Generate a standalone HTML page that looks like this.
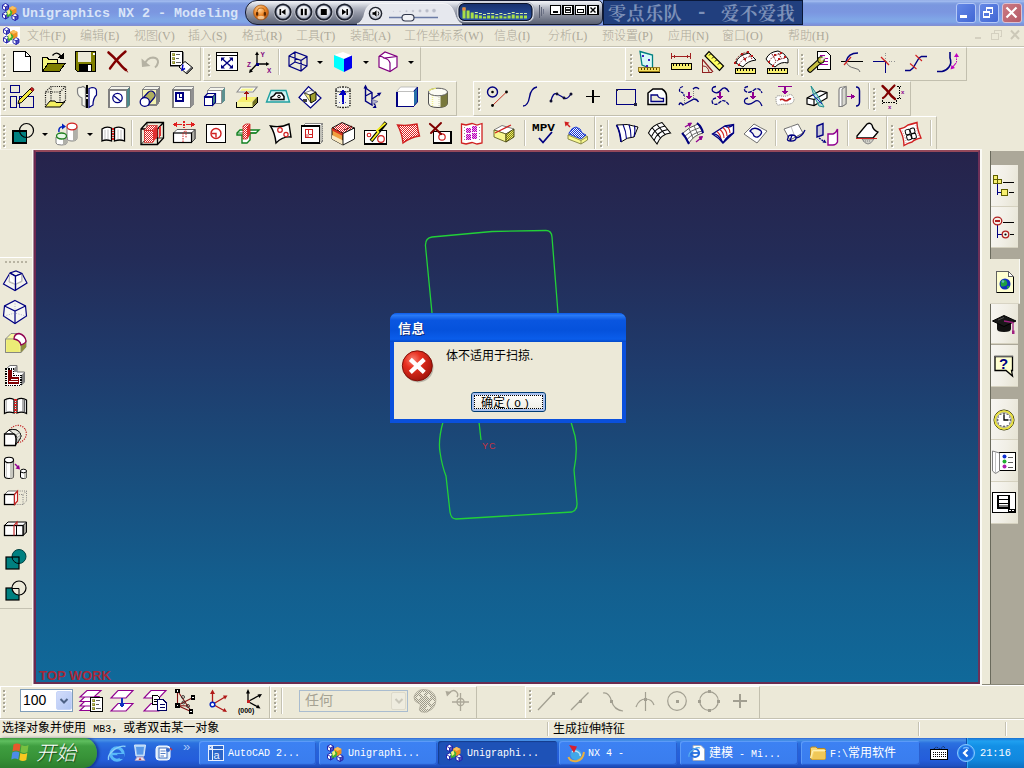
<!DOCTYPE html>
<html lang="zh-CN">
<head>
<meta charset="utf-8">
<title>Unigraphics NX 2 - Modeling</title>
<style>
html,body{margin:0;padding:0;}
body{width:1024px;height:768px;overflow:hidden;background:#ECE9D8;font-family:"Liberation Sans","Noto Sans CJK SC",sans-serif;font-size:12px;color:#000;}
#root{position:relative;width:1024px;height:768px;overflow:hidden;background:#ECE9D8;}
#root *{box-sizing:border-box;}
.abs,.ic,.grip,.vsep,.dd,.t{position:absolute;}
.ic{overflow:visible;shape-rendering:crispEdges;}
.ic .s{shape-rendering:geometricPrecision;}
.grip{width:3px;background-image:repeating-linear-gradient(to bottom,#A9A696 0,#A9A696 2px,transparent 2px,transparent 4px),repeating-linear-gradient(to bottom,transparent 0,transparent 1px,#fff 1px,#fff 3px,transparent 3px,transparent 4px);background-size:2px 100%,2px 100%;background-position:0 0,1px 0;background-repeat:no-repeat;}
.vsep{width:2px;border-left:1px solid #C5C2B2;border-right:1px solid #fff;}
.dd{width:0;height:0;border-left:3px solid transparent;border-right:3px solid transparent;border-top:3px solid #000;}
.t{white-space:nowrap;line-height:1;}
.menu{color:#ACA899;font-weight:300;font-size:12px;top:30px;font-family:"Liberation Serif","Noto Sans CJK SC",sans-serif;}
.hl{position:absolute;left:0;width:1024px;height:1px;}
.tb{position:absolute;border:1px solid #C2BFAE;border-top-color:#fff;border-left-color:#fff;}
.task{position:absolute;top:741px;height:24px;border-radius:3px;background:linear-gradient(#3C81F3,#3C81F3 10%,#3A7DEE 90%,#2F6FDE);box-shadow:inset 1px 1px 0 #5C9BF8,inset -1px -1px 0 #2A5FD0;color:#fff;font-size:12px;}
.task.on{background:#1E52B7;box-shadow:inset 1px 1px 1px #143C8C;}
.task span{position:absolute;left:29px;top:7px;white-space:nowrap;line-height:12px;font-family:"Liberation Mono","Noto Sans CJK SC",monospace;font-size:10px;}
.task span b{font-weight:normal;font-size:12px;}
.rtab{position:absolute;left:991px;width:27px;background:linear-gradient(100deg,#F7F6F2 0,#F1EFE6 50%,#E6E3D3 100%);border-bottom:1px solid #D5D1BF;}
</style>
</head>
<body>
<div id="root">
<svg class="abs" width="0" height="0" style="left:0;top:0"><defs><pattern id="hr" width="2" height="2" patternUnits="userSpaceOnUse"><rect width="2" height="2" fill="#fff"/><rect width="1" height="1" fill="#E02020"/><rect x="1" y="1" width="1" height="1" fill="#E02020"/></pattern><pattern id="hm" width="2" height="2" patternUnits="userSpaceOnUse"><rect width="2" height="2" fill="#F0A0F0"/><rect width="1" height="1" fill="#B000B0"/><rect x="1" y="1" width="1" height="1" fill="#B000B0"/></pattern><pattern id="hb" width="2" height="2" patternUnits="userSpaceOnUse"><rect width="2" height="2" fill="#fff"/><rect width="1" height="1" fill="#1030D0"/><rect x="1" y="1" width="1" height="1" fill="#1030D0"/></pattern><pattern id="hy" width="2" height="2" patternUnits="userSpaceOnUse"><rect width="2" height="2" fill="#F0F060"/><rect width="1" height="1" fill="#808020"/><rect x="1" y="1" width="1" height="1" fill="#808020"/></pattern></defs></svg>
<div class="abs" style="left:0;top:0;width:1024px;height:26px;background:linear-gradient(#96B0E8 0,#9DB8EE 1.5px,#82A0E2 3px,#7A97DF 5px,#7B96E0 12px,#7D9EE4 16px,#80A6E6 19px,#80A6E6 22px,#7B94E0 24px,#8490CC 26px);"></div>
<div class="t" style="left:22px;top:6px;font:bold 13.33px 'Liberation Mono',monospace;color:#D8E4F8;">Unigraphics NX 2 - Modeling</div>
<svg class="ic" style="left:1.5px;top:3px" width="18" height="18" viewBox="0 0 18 18"><path class="s" d="M0.5 2.2L3.5 0.5L6.5 2.2V5.8L3.5 7.5L0.5 5.8Z" fill="#fff" stroke="#1818A8" stroke-width=".9"/><path class="s" d="M3.5 3.9V7.5M0.8 2.4L3.5 3.9L6.2 2.4" stroke="#1818A8" stroke-width=".9" fill="none"/><path class="s" d="M3.5 3.9L6.5 2.2V5.8L3.5 7.5Z" fill="#1818A8" fill-opacity=".75"/><path class="s" d="M0.5 10.7L3.5 9L6.5 10.7V14.3L3.5 16L0.5 14.3Z" fill="#fff" stroke="#1818A8" stroke-width=".9"/><path class="s" d="M3.5 12.4V16M0.8 10.9L3.5 12.4L6.2 10.9" stroke="#1818A8" stroke-width=".9" fill="none"/><path class="s" d="M3.5 12.4L6.5 10.7V14.3L3.5 16Z" fill="#1818A8" fill-opacity=".75"/><path class="s" d="M10 12.2L13 10.5L16 12.2V15.8L13 17.5L10 15.8Z" fill="#fff" stroke="#1818A8" stroke-width=".9"/><path class="s" d="M13 13.9V17.5M10.3 12.4L13 13.9L15.7 12.4" stroke="#1818A8" stroke-width=".9" fill="none"/><path class="s" d="M13 13.9L16 12.2V15.8L13 17.5Z" fill="#1818A8" fill-opacity=".75"/><path class="s" d="M7 5L10.500 3L14.500 5V9.500L10.500 12L7 9.500Z" fill="#F09020"/><path class="s" d="M7 5L10.500 7L14.500 5L10.500 3Z" fill="#F8C060"/><path class="s" d="M4.500 9L8 6.500L10.500 9L9 13L5 14Z" fill="#40B030"/><path class="s" d="M5 8L7.500 6.500L8.500 10L6 12Z" fill="#F8F080"/></svg>
<div class="abs" style="left:245px;top:0px;width:358px;height:25px;border-radius:12px 5px 6px 12px;background:linear-gradient(#F4F5F8 0,#DCDFE6 12%,#B4B8C4 30%,#9498A6 52%,#747A8A 78%,#5A6072 100%);border:1px solid #141A30;"></div>
<svg class="ic" style="left:246px;top:0px" width="356" height="24" viewBox="0 0 356 24"><defs><radialGradient id="og" cx=".4" cy=".3" r=".75"><stop offset="0" stop-color="#FFD8A0"/><stop offset=".5" stop-color="#F08828"/><stop offset="1" stop-color="#A84808"/></radialGradient><radialGradient id="bg1" cx=".5" cy=".35" r=".7"><stop offset="0" stop-color="#FFFFFF"/><stop offset=".6" stop-color="#E4E6EC"/><stop offset="1" stop-color="#9AA0B0"/></radialGradient><linearGradient id="vg" x1="0" y1="0" x2="0" y2="1"><stop offset="0" stop-color="#17306C"/><stop offset="1" stop-color="#2A54A8"/></linearGradient></defs><g class="s"><circle cx="15" cy="12.500" r="7.500" fill="url(#og)" stroke="#9A5A20" stroke-width=".7"/><path d="M11 13Q11 8 15 8T19 13" fill="none" stroke="#B86818" stroke-width="1.100"/><rect x="10" y="12" width="2.300" height="3.800" rx="1" fill="#5A2800"/><rect x="17.700" y="12" width="2.300" height="3.800" rx="1" fill="#5A2800"/><ellipse cx="15" cy="17.500" rx="3.500" ry="1.800" fill="#FFE8C0" fill-opacity=".7"/><circle cx="37" cy="12.300" r="9.300" fill="#D8DAE2" fill-opacity=".7"/><circle cx="37" cy="12" r="8.600" fill="#1C202C"/><circle cx="37" cy="12" r="6.600" fill="url(#bg1)" stroke="#8088A0" stroke-width=".6"/><rect x="33.5" y="9" width="1.600" height="6" fill="#000"/><path d="M39.5 9V15L35.2 12Z" fill="#000"/><circle cx="57.8" cy="12.300" r="9.300" fill="#D8DAE2" fill-opacity=".7"/><circle cx="57.8" cy="12" r="8.600" fill="#1C202C"/><circle cx="57.8" cy="12" r="6.600" fill="url(#bg1)" stroke="#8088A0" stroke-width=".6"/><rect x="54.8" y="8.800" width="2.200" height="6.400" fill="#000"/><rect x="58.599999999999994" y="8.800" width="2.200" height="6.400" fill="#000"/><circle cx="77.8" cy="12.300" r="9.300" fill="#D8DAE2" fill-opacity=".7"/><circle cx="77.8" cy="12" r="8.600" fill="#1C202C"/><circle cx="77.8" cy="12" r="6.600" fill="url(#bg1)" stroke="#8088A0" stroke-width=".6"/><rect x="74.8" y="9" width="6" height="6" fill="#000"/><circle cx="98.5" cy="12.300" r="9.300" fill="#D8DAE2" fill-opacity=".7"/><circle cx="98.5" cy="12" r="8.600" fill="#1C202C"/><circle cx="98.5" cy="12" r="6.600" fill="url(#bg1)" stroke="#8088A0" stroke-width=".6"/><rect x="100.4" y="9" width="1.600" height="6" fill="#000"/><path d="M96.0 9V15L100.3 12Z" fill="#000"/><path d="M111 24Q117 22 119 12Q121 3.500 130 3.500H197Q205 3.500 208 12Q211 22 216 24Z" fill="#E6E8EE" stroke="#F8F8FA" stroke-width=".8"/><circle cx="129.500" cy="13.500" r="6.800" fill="#20242E"/><circle cx="129.500" cy="13.500" r="5.400" fill="url(#bg1)"/><path d="M126.500 12.300H128.300L130.500 10.300V16.700L128.300 14.700H126.500Z" fill="#000"/><path d="M132 11.500Q133.500 13.500 132 15.500" fill="none" stroke="#000" stroke-width=".9"/><path d="M143 17.500H192" stroke="#6C7CA6" stroke-width="1.400"/><circle cx="147.5" cy="11.50" r="0.40" fill="#B8BCC8" stroke="#D8DAE2" stroke-width=".4"/><circle cx="154" cy="11.35" r="0.65" fill="#B8BCC8" stroke="#D8DAE2" stroke-width=".4"/><circle cx="160.5" cy="11.20" r="0.90" fill="#B8BCC8" stroke="#D8DAE2" stroke-width=".4"/><circle cx="167" cy="11.05" r="1.15" fill="#B8BCC8" stroke="#D8DAE2" stroke-width=".4"/><circle cx="174" cy="10.90" r="1.40" fill="#B8BCC8" stroke="#D8DAE2" stroke-width=".4"/><circle cx="181" cy="10.75" r="1.65" fill="#B8BCC8" stroke="#D8DAE2" stroke-width=".4"/><circle cx="188" cy="10.60" r="1.90" fill="#B8BCC8" stroke="#D8DAE2" stroke-width=".4"/><rect x="156" y="14.500" width="12" height="6.500" rx="3.200" fill="#F0F1F5" stroke="#30364A" stroke-width="1.100"/><rect x="211" y="2" width="77" height="20" rx="7" fill="#E8EAF0" stroke="#9098A8" stroke-width=".6"/><rect x="213" y="3.500" width="73" height="17" rx="5.500" fill="url(#vg)" stroke="#0A1228" stroke-width="1.200"/><rect x="216.5" y="7.5" width="3" height="11" fill="#A8E048"/><rect x="216.5" y="7.5" width="3" height="3" fill="#F08040"/><rect x="220.6" y="10.5" width="3" height="8" fill="#A8E048"/><rect x="224.7" y="12.5" width="3" height="6" fill="#A8E048"/><rect x="228.8" y="14.5" width="3" height="4" fill="#A8E048"/><rect x="228.8" y="12.0" width="3" height="1" fill="#D8F0A0"/><rect x="232.9" y="15.5" width="3" height="3" fill="#A8E048"/><rect x="232.9" y="13.0" width="3" height="1" fill="#D8F0A0"/><rect x="237.0" y="16.5" width="3" height="2" fill="#A8E048"/><rect x="237.0" y="14.0" width="3" height="1" fill="#D8F0A0"/><rect x="241.1" y="15.5" width="3" height="3" fill="#A8E048"/><rect x="241.1" y="13.0" width="3" height="1" fill="#D8F0A0"/><rect x="245.2" y="15.5" width="3" height="3" fill="#A8E048"/><rect x="245.2" y="13.0" width="3" height="1" fill="#D8F0A0"/><rect x="249.3" y="16.5" width="3" height="2" fill="#A8E048"/><rect x="249.3" y="14.0" width="3" height="1" fill="#D8F0A0"/><rect x="253.4" y="15.5" width="3" height="3" fill="#A8E048"/><rect x="253.4" y="13.0" width="3" height="1" fill="#D8F0A0"/><rect x="257.5" y="16.5" width="3" height="2" fill="#A8E048"/><rect x="257.5" y="14.0" width="3" height="1" fill="#D8F0A0"/><rect x="261.6" y="15.5" width="3" height="3" fill="#A8E048"/><rect x="261.6" y="13.0" width="3" height="1" fill="#D8F0A0"/><rect x="265.7" y="14.5" width="3" height="4" fill="#A8E048"/><rect x="265.7" y="12.0" width="3" height="1" fill="#D8F0A0"/><rect x="269.8" y="15.5" width="3" height="3" fill="#A8E048"/><rect x="269.8" y="13.0" width="3" height="1" fill="#D8F0A0"/><rect x="273.9" y="15.5" width="3" height="3" fill="#A8E048"/><rect x="273.9" y="13.0" width="3" height="1" fill="#D8F0A0"/><rect x="278.0" y="15.5" width="3" height="3" fill="#A8E048"/><rect x="278.0" y="13.0" width="3" height="1" fill="#D8F0A0"/><path d="M293.500 5V18" stroke="#50566A" stroke-width="1"/><path d="M295.500 7V16" stroke="#60667A" stroke-width="1"/><path d="M297.500 9V14" stroke="#70768A" stroke-width="1"/></g><rect x="304.5" y="5.500" width="10" height="9" fill="#fff" stroke="#000" stroke-width="1.200"/><rect x="307" y="10.500" width="5" height="2" fill="#000"/><rect x="317.0" y="5.500" width="10" height="9" fill="#fff" stroke="#000" stroke-width="1.200"/><rect x="319.5" y="7.500" width="5" height="2" fill="none" stroke="#000" stroke-width=".9"/><rect x="319.5" y="10.500" width="5" height="2" fill="none" stroke="#000" stroke-width=".9"/><rect x="329.5" y="5.500" width="10" height="9" fill="#fff" stroke="#000" stroke-width="1.200"/><rect x="331.5" y="9.500" width="6" height="3" fill="none" stroke="#000" stroke-width="1"/><rect x="342.0" y="5.500" width="10" height="9" fill="#fff" stroke="#000" stroke-width="1.200"/><path class="s" d="M344.5 7.500L349.5 12.500M349.5 7.500L344.5 12.500" stroke="#000" stroke-width="1.400"/></svg>
<div class="abs" style="left:603px;top:0;width:200px;height:25px;background:#213F7E;border:1px solid #0A1838;"></div>
<div class="t" style="left:608px;top:-1px;font:bold 18px 'Liberation Serif','Noto Serif CJK SC',serif;color:#7C90B8;letter-spacing:.5px;">零点乐队</div>
<div class="t" style="left:696px;top:2px;font:bold 19px 'Liberation Mono',monospace;color:#7C90B8;">-</div>
<div class="t" style="left:721px;top:-1px;font:bold 18px 'Liberation Serif','Noto Serif CJK SC',serif;color:#7C90B8;letter-spacing:.5px;">爱不爱我</div>
<div class="abs" style="left:956px;top:3px;width:20px;height:20px;border-radius:3px;background:linear-gradient(135deg,#6488E6,#4166D4);border:1px solid #B4C8F6;"></div>
<div class="abs" style="left:979px;top:3px;width:20px;height:20px;border-radius:3px;background:linear-gradient(135deg,#6488E6,#4166D4);border:1px solid #B4C8F6;"></div>
<div class="abs" style="left:1002px;top:3px;width:20px;height:20px;border-radius:3px;background:linear-gradient(135deg,#CC7A84,#B45A66);border:1px solid #DCC0D0;"></div>
<svg class="ic" style="left:956px;top:3px" width="66" height="20" viewBox="0 0 66 20"><rect x="4" y="12" width="7" height="3" fill="#fff"/><g fill="none" stroke="#fff" stroke-width="1.200"><path d="M30.500 7.500V4.500H36.500V10.500H34"/><path d="M30.500 5.200H36.500" stroke-width="1.600"/><rect x="27.500" y="8.500" width="6" height="5.500"/><path d="M27.500 9.200H33.500" stroke-width="1.600"/></g><path class="s" d="M50.500 4.500L60.500 14.500M60.500 4.500L50.500 14.500" stroke="#fff" stroke-width="2.200"/></svg>
<div class="abs" style="left:0;top:26px;width:1024px;height:20px;background:#ECE9D8;"></div>
<div class="abs" style="left:4px;top:27px;width:16px;height:17px;background:#fff;"></div>
<svg class="ic" style="left:3px;top:26.5px" width="18" height="18" viewBox="0 0 18 18"><path class="s" d="M0.5 2.2L3.5 0.5L6.5 2.2V5.8L3.5 7.5L0.5 5.8Z" fill="#fff" stroke="#1818A8" stroke-width=".9"/><path class="s" d="M3.5 3.9V7.5M0.8 2.4L3.5 3.9L6.2 2.4" stroke="#1818A8" stroke-width=".9" fill="none"/><path class="s" d="M3.5 3.9L6.5 2.2V5.8L3.5 7.5Z" fill="#1818A8" fill-opacity=".75"/><path class="s" d="M0.5 10.7L3.5 9L6.5 10.7V14.3L3.5 16L0.5 14.3Z" fill="#fff" stroke="#1818A8" stroke-width=".9"/><path class="s" d="M3.5 12.4V16M0.8 10.9L3.5 12.4L6.2 10.9" stroke="#1818A8" stroke-width=".9" fill="none"/><path class="s" d="M3.5 12.4L6.5 10.7V14.3L3.5 16Z" fill="#1818A8" fill-opacity=".75"/><path class="s" d="M10 12.2L13 10.5L16 12.2V15.8L13 17.5L10 15.8Z" fill="#fff" stroke="#1818A8" stroke-width=".9"/><path class="s" d="M13 13.9V17.5M10.3 12.4L13 13.9L15.7 12.4" stroke="#1818A8" stroke-width=".9" fill="none"/><path class="s" d="M13 13.9L16 12.2V15.8L13 17.5Z" fill="#1818A8" fill-opacity=".75"/><path class="s" d="M7 5L10.500 3L14.500 5V9.500L10.500 12L7 9.500Z" fill="#F09020"/><path class="s" d="M7 5L10.500 7L14.500 5L10.500 3Z" fill="#F8C060"/><path class="s" d="M4.500 9L8 6.500L10.500 9L9 13L5 14Z" fill="#40B030"/><path class="s" d="M5 8L7.500 6.500L8.500 10L6 12Z" fill="#F8F080"/></svg>
<div class="t menu" style="left:27px;">文件(F)</div>
<div class="t menu" style="left:80px;">编辑(E)</div>
<div class="t menu" style="left:134px;">视图(V)</div>
<div class="t menu" style="left:188px;">插入(S)</div>
<div class="t menu" style="left:242px;">格式(R)</div>
<div class="t menu" style="left:296px;">工具(T)</div>
<div class="t menu" style="left:350px;">装配(A)</div>
<div class="t menu" style="left:404px;">工作坐标系(W)</div>
<div class="t menu" style="left:494px;">信息(I)</div>
<div class="t menu" style="left:548px;">分析(L)</div>
<div class="t menu" style="left:602px;">预设置(P)</div>
<div class="t menu" style="left:668px;">应用(N)</div>
<div class="t menu" style="left:722px;">窗口(O)</div>
<div class="t menu" style="left:788px;">帮助(H)</div>
<svg class="ic" style="left:930px;top:28px" width="90" height="14" viewBox="0 0 90 14"><rect x="45" y="8.500" width="6" height="2" fill="#D4D0C0"/><g fill="none" stroke="#D4D0C0" stroke-width="1.200"><path d="M64.500 4.500V2.500H71.500V8.500H69.500"/><rect x="61.500" y="5.500" width="7" height="6"/></g><path class="s" d="M81 2.500L89 11M89 2.500L81 11" stroke="#CCC8B8" stroke-width="2"/></svg>
<div class="hl" style="top:46px;background:#C5C2B2;"></div><div class="hl" style="top:47px;background:#fff;"></div>
<div class="tb" style="left:0px;top:47px;width:201px;height:34px;"></div>
<div class="tb" style="left:203px;top:47px;width:218px;height:34px;"></div>
<div class="tb" style="left:625px;top:47px;width:342px;height:34px;"></div>
<div class="tb" style="left:0px;top:81px;width:457px;height:35px;"></div>
<div class="tb" style="left:473px;top:81px;width:438px;height:35px;"></div>
<div class="tb" style="left:0px;top:116px;width:595px;height:34px;"></div>
<div class="tb" style="left:595px;top:116px;width:292px;height:34px;"></div>
<div class="tb" style="left:887px;top:116px;width:50px;height:34px;"></div>
<i class="grip" style="left:3px;top:54px;height:23px"></i>
<svg class="ic" style="left:10px;top:50px" width="24" height="24" viewBox="0 0 24 24"><path d="M3.5 1.5H15.5L20.5 6.5V21.5H3.5Z" fill="#fff" stroke="#000" stroke-width="1.4"/><path d="M15.5 1.5V6.5H20.5" fill="none" stroke="#000"/></svg>
<svg class="ic" style="left:41px;top:50px" width="24" height="24" viewBox="0 0 24 24"><path d="M1.5 21V7.5H6L8 9.5H16.5V13" fill="#F4F47C" stroke="#000"/><path d="M1.5 21.5L7 13.5H24L18.5 21.5Z" fill="#808000" stroke="#000"/><path class="s" d="M11.5 5.5Q15.5 0.5 20 6" fill="none" stroke="#000" stroke-width="1.3"/><path d="M22.5 3V9.5L16.5 8Z" fill="#000"/></svg>
<svg class="ic" style="left:73px;top:50px" width="24" height="24" viewBox="0 0 24 24"><path d="M2.5 1.5H22.5V21.5H4.5L2.5 19.5Z" fill="#808000" stroke="#000" stroke-width="1.3"/><rect x="5" y="2" width="13" height="10" fill="#ECE9D8"/><rect x="6" y="14" width="13" height="8" fill="#000"/><rect x="15" y="15" width="3" height="6" fill="#fff"/><rect x="19.5" y="3" width="2" height="2" fill="#fff"/></svg>
<svg class="ic" style="left:105px;top:50px" width="24" height="24" viewBox="0 0 24 24"><g class="s" stroke="#800000" fill="none" stroke-linecap="round"><path d="M3.5 2.5Q9 7 14 13T21 20" stroke-width="2.6"/><path d="M20.5 1.5Q13 8 9.5 12.5T5 18.5" stroke-width="2.4"/><path d="M20 18L22.5 22" stroke-width="1"/></g></svg>
<svg class="ic" style="left:138px;top:50px" width="24" height="24" viewBox="0 0 24 24"><g class="s"><path d="M6 15.5Q9 7.5 15 7.5Q20.5 8 20 12.5Q19.5 15.5 17 17.5" fill="none" stroke="#B5B2A3" stroke-width="2"/><path d="M3.5 8.5L4 17L12.5 16Z" fill="#B5B2A3"/></g></svg>
<svg class="ic" style="left:169px;top:50px" width="24" height="24" viewBox="0 0 24 24"><rect x="1.5" y="1.5" width="12" height="14" fill="#fff" stroke="#000"/><path d="M1 16H14M14 2V16" stroke="#808080" fill="none"/><g fill="#C8C850" stroke="#606000" stroke-width=".6"><rect x="3.5" y="3.5" width="2" height="2"/><rect x="3.5" y="7.5" width="2" height="2"/><rect x="3.5" y="11.5" width="2" height="2"/></g><path d="M7 4.5H11M7 8.5H10M7 12.5H11.5" stroke="#606060"/><path class="s" d="M10 17L16 11.5L24 18L18 24Z" fill="#fff" stroke="#000"/><path class="s" d="M18 24L24 18L22.5 16.5L17 22Z" fill="#606060"/><path class="s" d="M14 14.5L13 20L16 18.5" fill="none" stroke="#0000C0" stroke-width="1.4"/></svg>
<i class="grip" style="left:208px;top:54px;height:23px"></i>
<svg class="ic" style="left:215px;top:50px" width="24" height="24" viewBox="0 0 24 24"><rect x="1.7" y="2.7" width="21" height="17.6" fill="#fff" stroke="#000" stroke-width="1.5"/><path d="M2 5.5H22" stroke="#000"/><g class="s" stroke="#000080" stroke-width="1.4" fill="#000080"><path d="M7.5 9L16.5 17M16.5 9L7.5 17"/><path d="M6 7.5H10L6 11.5ZM18 7.5H14L18 11.5ZM6 18.5H10L6 14.5ZM18 18.5H14L18 14.5Z" stroke="none"/></g></svg>
<svg class="ic" style="left:247px;top:50px" width="24" height="24" viewBox="0 0 24 24"><g class="s" stroke="#000" stroke-width="1.3" fill="none"><path d="M10 14V3.5M10 14H21M10 14L3 21.5"/></g><path class="s" d="M10 1.5L8 5H12ZM22.5 14L19 12V16ZM2 23L3 19L6 21.5Z" fill="#000"/><rect x="8.5" y="12.5" width="3" height="3" fill="#000080"/><text x="13.5" y="6.5" font-family="Liberation Sans,sans-serif" font-size="6.5" font-weight="bold" fill="#800080">Y</text><text x="20" y="23" font-family="Liberation Sans,sans-serif" font-size="6.5" font-weight="bold" fill="#800080">X</text><text x="0" y="16.5" font-family="Liberation Sans,sans-serif" font-size="6.5" font-weight="bold" fill="#800080">Z</text></svg>
<i class="vsep" style="left:278px;top:49px;height:26px"></i>
<svg class="ic" style="left:286px;top:50px" width="24" height="24" viewBox="0 0 24 24"><g class="s" fill="none" stroke="#000080" stroke-width="1.2"><path d="M3 6L9 2L21 6.5V16L15 21L3 16ZM3 6L15 10.5V21M15 10.5L21 6.5M9 2V12L3 16M9 12L21 16"/></g></svg>
<i class="dd" style="left:317px;top:61px"></i>
<svg class="ic" style="left:331px;top:50px" width="24" height="24" viewBox="0 0 24 24"><g class="s"><path d="M3 5L12 2L21 5.5L13 9Z" fill="#fff"/><path d="M3 5L13 9V22L3 17Z" fill="#00FFFF"/><path d="M13 9L21 5.5V18L13 22Z" fill="#0000F0"/></g></svg>
<i class="dd" style="left:363px;top:61px"></i>
<svg class="ic" style="left:376px;top:50px" width="24" height="24" viewBox="0 0 24 24"><g class="s" fill="#fff" stroke="#800080" stroke-width="1.2"><path d="M3 6.5L9 2L21 6.5V17L14 21.5L3 17Z"/><path d="M3 6.5Q6 6 8 8L21 6.5M8 8Q13 9 14 13V21.5" fill="none"/></g></svg>
<i class="dd" style="left:408px;top:61px"></i>
<i class="grip" style="left:630px;top:54px;height:23px"></i>
<svg class="ic" style="left:637px;top:50px" width="24" height="24" viewBox="0 0 24 24"><path class="s" d="M3 1.5L15.5 5V19L5 15Z" fill="#D8F8F8" stroke="#008080" stroke-width="1.3"/><g fill="#4020C0"><rect x="5" y="5" width="2" height="2"/><rect x="11" y="9" width="2" height="2"/><rect x="9" y="15" width="2" height="2"/></g><rect x="2" y="21" width="21" height="2" fill="#000"/><rect x="1.5" y="17.5" width="21" height="4" fill="#F4E060" stroke="#806000" stroke-width=".8"/><path d="M4.5 18V20M7.5 18V20M10.5 18V20M13.5 18V20M16.5 18V20M19.5 18V20" stroke="#604000"/></svg>
<svg class="ic" style="left:669px;top:50px" width="24" height="24" viewBox="0 0 24 24"><path d="M2.5 3V9M21.5 3V9M3 6.5H21" stroke="#A02020" fill="none"/><path d="M3 6.5L6 5V8ZM21 6.5L18 5V8Z" fill="#A02020"/><rect x="2.5" y="13.5" width="20" height="6" fill="#F8F070" stroke="#000" stroke-width="1.1"/><path d="M4.5 14V16" stroke="#000"/><path d="M7.5 14V16" stroke="#000"/><path d="M10.5 14V16" stroke="#000"/><path d="M13.5 14V16" stroke="#000"/><path d="M16.5 14V16" stroke="#000"/><path d="M19.5 14V16" stroke="#000"/><path d="M22.5 14V16" stroke="#000"/></svg>
<svg class="ic" style="left:700px;top:50px" width="24" height="24" viewBox="0 0 24 24"><path d="M2.5 9V22.5H12" stroke="#902020" fill="none" stroke-width="1.3"/><path class="s" d="M3 16Q8 16 9 22" stroke="#902020" fill="none"/><path class="s" d="M5 6L9 1.5L23.500 16L19.500 20.5Z" fill="#FFFF60" stroke="#000" stroke-width="1.2"/><path class="s" d="M9 5.5L10.5 4M12 8.500L13.500 7M15 11.5L16.500 10M18 14.5L19.500 13" stroke="#000"/><path class="s" d="M3 10L13 22" stroke="#902020" stroke-width="1.2"/></svg>
<svg class="ic" style="left:733px;top:50px" width="24" height="24" viewBox="0 0 24 24"><path class="s" d="M3 13Q5 5 16 3L20 7L23 10Q14 11 10 17Z" fill="#fff" stroke="#000" stroke-width="1"/><path class="s" d="M2 13Q4 4 15 2M6 15Q9 8 19 6M9 4L13 12M15 2L19 9" fill="none" stroke="#802020" stroke-dasharray="2 1.2"/><g fill="#B81818"><rect x="1" y="12" width="2" height="2"/><rect x="8" y="3" width="2" height="2"/><rect x="14" y="1" width="2" height="2"/><rect x="5" y="14" width="2" height="2"/><rect x="11" y="8" width="2" height="2"/><rect x="18" y="5" width="2" height="2"/></g><rect x="2.5" y="18.5" width="20" height="5" fill="#F8F070" stroke="#000" stroke-width="1.1"/><path d="M4.5 19V21" stroke="#000"/><path d="M7.5 19V21" stroke="#000"/><path d="M10.5 19V21" stroke="#000"/><path d="M13.5 19V21" stroke="#000"/><path d="M16.5 19V21" stroke="#000"/><path d="M19.5 19V21" stroke="#000"/><path d="M22.5 19V21" stroke="#000"/></svg>
<svg class="ic" style="left:765px;top:50px" width="24" height="24" viewBox="0 0 24 24"><path class="s" d="M1 9Q4 2 13 1Q19 2 23 9V13Q16 11 10 17L4 13Z" fill="#fff" stroke="#000" stroke-width="1"/><path class="s" d="M4 12Q7 5 16 4M8 16Q11 9 21 8M7 4L11 11M13 3L17 9" fill="none" stroke="#802020" stroke-dasharray="2 1.2"/><g fill="#B81818"><rect x="3" y="11" width="2" height="2"/><rect x="9" y="4" width="2" height="2"/><rect x="15" y="2" width="2" height="2"/><rect x="7" y="15" width="2" height="2"/><rect x="13" y="8" width="2" height="2"/><rect x="19" y="6" width="2" height="2"/></g><rect x="2.5" y="18.5" width="20" height="5" fill="#F8F070" stroke="#000" stroke-width="1.1"/><path d="M4.5 19V21" stroke="#000"/><path d="M7.5 19V21" stroke="#000"/><path d="M10.5 19V21" stroke="#000"/><path d="M13.5 19V21" stroke="#000"/><path d="M16.5 19V21" stroke="#000"/><path d="M19.5 19V21" stroke="#000"/><path d="M22.5 19V21" stroke="#000"/></svg>
<i class="vsep" style="left:797px;top:49px;height:26px"></i>
<i class="grip" style="left:801px;top:54px;height:23px"></i>
<svg class="ic" style="left:808px;top:50px" width="24" height="24" viewBox="0 0 24 24"><path d="M9.500 1.500H18.500L22.500 5.500V19.500H9.500Z" fill="#fff" stroke="#000" stroke-width="1.2"/><path d="M12 8.500H20M12 11.500H20M12 14.500H20M12 5.500H17" stroke="#A000A0" stroke-width="1.300"/><path class="s" d="M2 20L12 11" stroke="#000" stroke-width="5.500" stroke-linecap="round"/><path class="s" d="M2 20L12 11" stroke="#C8C040" stroke-width="3.300" stroke-linecap="round"/><circle class="s" cx="13" cy="10" r="3.300" fill="#C8C040" stroke="#000"/><path class="s" d="M13 10L17 7" stroke="#ECE9D8" stroke-width="2.200"/></svg>
<svg class="ic" style="left:840px;top:50px" width="24" height="24" viewBox="0 0 24 24"><path d="M1 11.500H23" stroke="#000" stroke-width="1.400"/><path class="s" d="M18 3Q8 3 6 11.500" fill="none" stroke="#000080" stroke-width="1.500"/><path class="s" d="M6 11.500Q8 17 14 18T20 22" fill="none" stroke="#707070" stroke-width="1"/><path class="s" d="M4 15L11 7" stroke="#D02020" stroke-width="1.200"/></svg>
<svg class="ic" style="left:872px;top:50px" width="24" height="24" viewBox="0 0 24 24"><path d="M1 11.500H13.500V23" fill="none" stroke="#000080" stroke-width="1.500"/><path d="M13.500 11V1M14 11.500H23" stroke="#909090" stroke-dasharray="1 1.500" fill="none"/><path class="s" d="M9 7L17 15" stroke="#D02020" stroke-width="1.200"/></svg>
<svg class="ic" style="left:904px;top:50px" width="24" height="24" viewBox="0 0 24 24"><path class="s" d="M1 20.500H6L9 18L15 8L17.500 6.500H23" fill="none" stroke="#000080" stroke-width="1.400"/><path class="s" d="M11.500 5L18 11M6 13.500L12.500 19" stroke="#D02020" stroke-width="1.100"/></svg>
<svg class="ic" style="left:936px;top:50px" width="24" height="24" viewBox="0 0 24 24"><path class="s" d="M1 21.500H6Q10 21 13 17T14 8V2" fill="none" stroke="#000080" stroke-width="1.600"/><g class="s" stroke="#C000C0" fill="#C000C0"><path d="M20.500 6V13" stroke-dasharray="1.500 1"/><path d="M20.500 3L18 7H23Z" stroke="none"/><path d="M20 13L16 18" stroke-width="1.200"/><path d="M14.500 19.500L15.500 15L19 18Z" stroke="none"/></g></svg>
<i class="grip" style="left:3px;top:88px;height:23px"></i>
<svg class="ic" style="left:10px;top:84px" width="24" height="24" viewBox="0 0 24 24"><g fill="none" stroke="#000080" stroke-width="1.4"><rect x="0.7" y="1.7" width="8.600" height="6.600"/><rect x="0.7" y="12.700" width="5.600" height="10.600"/><rect x="9.700" y="12.700" width="13.600" height="10.600"/></g><path class="s" d="M9 16L20 5L22.500 7.500L11.500 18.500L8 19.500Z" fill="#F4E840" stroke="#000" stroke-width="1"/><path class="s" d="M20 5L21.500 3.500Q23.500 3.500 24 6L22.500 7.500Z" fill="#D02020" stroke="#600000" stroke-width=".8"/></svg>
<svg class="ic" style="left:42.5px;top:84px" width="24" height="24" viewBox="0 0 24 24"><g fill="none" stroke="#000" stroke-dasharray="1 1.200" stroke-width="1.200"><path class="s" d="M2.500 23V8L8 2.500H22.500V17L17 23M2.500 8H17V22M17 8L22.500 2.500M8 2.500V17"/></g><path class="s" d="M2 23L7 17H12L13 18.500H20L22 17L17 23Z" fill="#F4F060" stroke="#000" stroke-width="1"/></svg>
<svg class="ic" style="left:74.5px;top:84px" width="24" height="24" viewBox="0 0 24 24"><path class="s" d="M2.500 5Q3 3 6 3.500L8 2.500L10.500 4V23L7 21V14Q2.500 12 2.500 8Z" fill="#F8F8F0" stroke="#808080" stroke-width="1.200"/><path class="s" d="M14 4.500L17 3.500Q21.500 3.500 21.500 7V11Q18 14 18 21L14 23.500Z" fill="#fff" stroke="#000080" stroke-width="1.200"/><path d="M12 0.500V25" stroke="#000" stroke-width="1.300" stroke-dasharray="9 1.500 2 1.500"/></svg>
<svg class="ic" style="left:106.5px;top:84px" width="24" height="24" viewBox="0 0 24 24"><path d="M1.500 5.500L4.500 2.500H22.500V20.500L19.500 23.500" fill="#F4F4EC" stroke="#909090" stroke-width="1"/><path d="M19.500 5.500L22.500 2.500V20.500L19.500 23.500Z" fill="#4C8C8C" stroke="#707070" stroke-width=".6"/><rect x="1.750" y="5.750" width="17.500" height="17.500" fill="#fff" stroke="#808080" stroke-width="1.500"/><g class="s" fill="none" stroke="#000080" stroke-width="1.300"><circle cx="10.500" cy="14" r="4.700"/><path d="M6.500 11.500L14 17.500"/></g></svg>
<svg class="ic" style="left:138px;top:84px" width="24" height="24" viewBox="0 0 24 24"><path d="M4.500 5.500L7.500 2.500H21.500V17.500L18.500 21.500" fill="#F4F4EC" stroke="#909090"/><path d="M18.500 5.500L21.500 2.500V17.500L18.500 21.500Z" fill="#808080"/><rect x="4.500" y="5.500" width="14" height="15.500" fill="#F4F4B0" stroke="#808080" stroke-width="1.300"/><g class="s"><path d="M4 15L10 8.500A4 4 0 0 1 16 14L10 21Z" fill="#B0B060" stroke="#000080" stroke-width="1.200"/><ellipse cx="6.800" cy="18" rx="4.600" ry="4.300" fill="#fff" stroke="#000080" stroke-width="1.300"/></g></svg>
<svg class="ic" style="left:170.5px;top:84px" width="24" height="24" viewBox="0 0 24 24"><path d="M1.500 5.500L4.500 2.500H22.500V20.500L19.500 23.500" fill="#F4F4EC" stroke="#909090" stroke-width="1"/><path d="M19.500 5.500L22.500 2.500V20.500L19.500 23.500Z" fill="#909090"/><rect x="1.750" y="5.750" width="17.500" height="17.500" fill="#fff" stroke="#808080" stroke-width="1.500"/><rect x="5" y="9" width="7" height="8" fill="#fff" stroke="#000080" stroke-width="1.600"/><path d="M8.500 9V13.500H12" stroke="#000080" stroke-width="1.400" fill="none"/></svg>
<svg class="ic" style="left:202px;top:84px" width="24" height="24" viewBox="0 0 24 24"><path d="M5.500 6.500L8.500 3.500H22.500V16.500L19.500 19.500" fill="#F4F4EC" stroke="#A0A0A0"/><path d="M19.500 6.500L22.500 3.500V16.500L19.500 19.500Z" fill="#5C9090"/><rect x="5.500" y="6.500" width="14" height="13" fill="#fff" stroke="#909090" stroke-width="1.200"/><path class="s" d="M2.500 13L5.500 9.500H13.500V18L10.500 21.500Z" fill="#F4F4EC" stroke="#000080" stroke-width="1.200"/><path class="s" d="M10.500 13L13.500 9.500V18L10.500 21.500Z" fill="#408080" stroke="#000080"/><rect x="2.600" y="13" width="8" height="8.400" fill="#fff" stroke="#000080" stroke-width="1.400"/></svg>
<svg class="ic" style="left:234.5px;top:84px" width="24" height="24" viewBox="0 0 24 24"><path class="s" d="M2 8L6 3H22L18 8Z" fill="#fff" stroke="#909090" stroke-width="1.200"/><path class="s" d="M5 7L7 4.500H19L17 7Z" fill="#F8F890"/><path class="s" d="M2 18L7 13H22L17 18Z" fill="#F8F070"/><rect x="2" y="18" width="15.500" height="5" fill="#F8F8A0"/><path class="s" d="M17.500 18L22 13V18.500L17.500 23Z" fill="#707020"/><path d="M1.500 17.500V23.500H17.500L22.500 18.500V13" fill="none" stroke="#000" stroke-width="1.300"/><path d="M11.500 16V9" stroke="#A01010" stroke-width="1.600"/><path d="M11.500 6.500L8.500 10H14.500Z" fill="#A01010"/></svg>
<svg class="ic" style="left:266px;top:84px" width="24" height="24" viewBox="0 0 24 24"><path class="s" d="M5 6.500H20L23.500 18H0.500Z" fill="#D0F4F4" stroke="#20A0A0" stroke-width="1.400"/><path class="s" d="M5 15.500V13.500L8 11.500L10 9H15.500L18 12.500V15.500Z" fill="#fff" stroke="#000" stroke-width="1.500"/><circle class="s" cx="13" cy="12.500" r="1.300" fill="none" stroke="#000"/></svg>
<svg class="ic" style="left:298px;top:84px" width="24" height="24" viewBox="0 0 24 24"><path class="s" d="M1 13.500L10.500 2.500L23 14L12.500 24Z" fill="#fff" stroke="#000080" stroke-width="1.200"/><path d="M5 15H9V18H5Z" fill="#404040"/><path class="s" d="M6 9L13 6.500L18 8L12 11Z" fill="#fff" stroke="#606060" stroke-width=".8"/><path class="s" d="M6 9L12 11L13 19Z" fill="#F8F080" stroke="#404040" stroke-width=".8"/><path class="s" d="M12 11L18 8V16L13 19Z" fill="#A0A030" stroke="#000" stroke-width=".9"/></svg>
<svg class="ic" style="left:330.5px;top:84px" width="24" height="24" viewBox="0 0 24 24"><g class="s" fill="#F4F4EC" stroke="#000" stroke-width="1.300" stroke-dasharray="1.300 1.100"><path d="M5 5.500Q5 3 12 3T19 5.500V21Q19 23.500 12 23.500T5 21Z"/><path d="M5 5.500Q5 8 12 8T19 5.500" fill="none"/></g><path d="M12 20V9" stroke="#0000C0" stroke-width="1.800"/><path d="M12 5L8.500 10.500H15.500Z" fill="#0000C0"/><path d="M8 18.500H16" stroke="#6060C0" stroke-dasharray="1 2"/></svg>
<svg class="ic" style="left:362px;top:84px" width="24" height="24" viewBox="0 0 24 24"><g class="s" fill="none" stroke="#000080" stroke-width="1.400"><path d="M3.500 4V17L10 21V8.500ZM10 8.500L3.500 12"/><path d="M3.500 5V3"/><path d="M10 15L16 11M10 16L13 21"/></g><path class="s" d="M3.500 0.500L1.500 4.500H5.500ZM19.500 8.500L15 9L17 12.500ZM14.500 24H10.500L13.500 20.500Z" fill="#000080"/><path class="s" d="M10 15.500L16 17.500L10.500 20.500Z" fill="#B0B0D0" stroke="#606090" stroke-width=".7"/></svg>
<svg class="ic" style="left:394.5px;top:84px" width="24" height="24" viewBox="0 0 24 24"><path class="s" d="M1.500 7.500L5.500 3H22.500L18.500 7.500Z" fill="#fff" stroke="#B0B0B0" stroke-width=".8"/><path class="s" d="M18.500 7.500L22.500 3V18L18.500 22.500Z" fill="#2870A8" stroke="#000080" stroke-width=".9"/><rect x="1.800" y="7.500" width="16.700" height="15" fill="#fff"/><path d="M1.800 7.500V22.700H18.500" fill="none" stroke="#000080" stroke-width="1.400"/><path d="M1.800 7.500H18.500" stroke="#C0C0C0" stroke-width=".6"/></svg>
<svg class="ic" style="left:426px;top:84px" width="24" height="24" viewBox="0 0 24 24"><g class="s"><path d="M2.500 8V19Q2.500 23.500 12 23.500T21.500 19V8Z" fill="#FCFCF0" stroke="#505050" stroke-width="1"/><path d="M14.500 11V23.300Q21.500 23 21.500 19V8Q20 11 14.500 11Z" fill="#78783C"/><path d="M13 11V23" stroke="#C8C8B0" stroke-dasharray="1 1"/><path d="M6.500 11V22" stroke="#F0F090" stroke-width="1.500" stroke-dasharray="1 1"/><ellipse cx="12" cy="8" rx="9.500" ry="3.800" fill="#FCFCF4" stroke="#606060" stroke-width="1"/><path d="M3 7A9.500 3.800 0 0 1 10 4.300" stroke="#E8E870" fill="none" stroke-width="1.200"/></g></svg>
<i class="grip" style="left:478px;top:88px;height:23px"></i>
<svg class="ic" style="left:485px;top:84px" width="24" height="24" viewBox="0 0 24 24"><g class="s"><circle cx="7.500" cy="8" r="5" fill="none" stroke="#000080" stroke-width="1.400"/><circle cx="7.500" cy="8" r="1.300" fill="#000"/><path d="M7.500 21.500L21.500 8" stroke="#C03020" stroke-width="1"/><circle cx="7.500" cy="21.500" r="1.400" fill="#000"/><circle cx="21.500" cy="8" r="1.400" fill="#000"/></g></svg>
<svg class="ic" style="left:517.5px;top:84px" width="24" height="24" viewBox="0 0 24 24"><path class="s" d="M5 22Q10 22 11.500 13T19 3" fill="none" stroke="#000080" stroke-width="1.400"/></svg>
<svg class="ic" style="left:549px;top:84px" width="24" height="24" viewBox="0 0 24 24"><g class="s"><path d="M2 17Q4 8 8 10T15 14T22 10" fill="none" stroke="#000080" stroke-width="1.300"/><g fill="#101030"><circle cx="2" cy="17" r="1.500"/><circle cx="8" cy="10" r="1.400"/><circle cx="15" cy="14" r="1.400"/><circle cx="22" cy="10" r="1.500"/></g></g></svg>
<svg class="ic" style="left:581px;top:84px" width="24" height="24" viewBox="0 0 24 24"><path d="M12 5.500V19M5 12.500H19" stroke="#000" stroke-width="1.700" fill="none"/></svg>
<svg class="ic" style="left:614px;top:84px" width="24" height="24" viewBox="0 0 24 24"><rect x="2.700" y="5.700" width="18.600" height="14.600" fill="none" stroke="#000080" stroke-width="1.400"/><rect x="1.500" y="4.500" width="2.500" height="2.500" fill="#202040"/><rect x="20" y="19" width="2.500" height="2.500" fill="#202040"/></svg>
<svg class="ic" style="left:645px;top:84px" width="24" height="24" viewBox="0 0 24 24"><path class="s" d="M3 9L8 5H17Q22 8 21.500 13V20.500H3Z" fill="#fff" stroke="#000" stroke-width="1.500"/><path class="s" d="M6 17.500V11H12.500Q13 14.500 18.500 14.500V17.500Z" fill="#ECE9D8" stroke="#000080" stroke-width="1.300"/></svg>
<svg class="ic" style="left:677px;top:84px" width="24" height="24" viewBox="0 0 24 24"><g class="s" fill="none" stroke="#000080" stroke-width="1.300"><path d="M6 2.500Q1 4 3 8Q7 8 7 12" stroke-dasharray="3 1"/><path d="M16 5Q19 2 22 5"/><path d="M2 21Q3 17 6 21L17 15Q20 15 21.500 18"/></g><path d="M7.500 12V21M16.500 5V15" stroke="#808080" stroke-dasharray="1 1"/><path d="M12 8V14" stroke="#900090" stroke-width="1.500"/><path d="M9 12H15L12 16Z" fill="#900090"/></svg>
<svg class="ic" style="left:709px;top:84px" width="24" height="24" viewBox="0 0 24 24"><g class="s" fill="none" stroke="#000080" stroke-width="1.300"><path d="M7 2.500Q2 3 3.500 7Q8 11 12 6T20 8" /><path d="M7 14Q2 15 3.500 19Q7 22 11 18T20 21" stroke-dasharray="3.500 1"/></g><path d="M11 8V14" stroke="#900090" stroke-width="1.500"/><path d="M8 12H14L11 16Z" fill="#900090"/></svg>
<svg class="ic" style="left:741.5px;top:84px" width="24" height="24" viewBox="0 0 24 24"><g class="s" fill="none" stroke="#000080" stroke-width="1.300"><path d="M6 2.500Q1 3 3 7Q7 10 12 6T20 9" stroke-dasharray="4 1"/><path d="M6 14Q1 15 3 19Q7 22 12 18T20 22"/></g><path d="M11 8V14" stroke="#900090" stroke-width="1.500"/><path d="M8 12H14L11 16Z" fill="#900090"/></svg>
<svg class="ic" style="left:773px;top:84px" width="24" height="24" viewBox="0 0 24 24"><path d="M5 2.500H19" stroke="#900090" stroke-width="1.700"/><path d="M12 3V9" stroke="#900090" stroke-width="1.500"/><path d="M9 7H15L12 11Z" fill="#900090"/><path class="s" d="M3 14Q3 11 8 12T16 11T21 15Q21 20 15 20T6 21T3 14Z" fill="#fff" stroke="#808080" stroke-dasharray="1 1"/><path class="s" d="M7 16Q9 14.500 11 16T15 16T18 15" fill="none" stroke="#C02020" stroke-width="1.600"/></svg>
<svg class="ic" style="left:805px;top:84px" width="24" height="24" viewBox="0 0 24 24"><g class="s" fill="#fff" stroke="#000" stroke-width="1.200"><path d="M2 14L15 7L22 8.500V14L9 21.500L2 20Z"/><path d="M2 14L9 15.500V21.500M9 15.500L22 8.500" fill="none"/></g><path class="s" d="M6 2L9 12L14 22L19 23L13 12Z" fill="#80D0D0" fill-opacity=".6" stroke="#209090" stroke-width="1"/><path class="s" d="M7 10L17 20" stroke="#2020C0"/></svg>
<svg class="ic" style="left:837px;top:84px" width="24" height="24" viewBox="0 0 24 24"><g class="s"><path d="M2 6Q2 3 6 3L9 2.500V20L5 22.500H2Z" fill="#fff" stroke="#808080" stroke-width="1.200"/><path d="M5 5L9 2.500V20L5 22.500Z" fill="#D8D8D0" stroke="#808080"/></g><path d="M10 12.500H15" stroke="#900090" stroke-width="1.500"/><path d="M14 9.500V15.500L18 12.500Z" fill="#900090"/><path class="s" d="M19 3Q22.500 3 22.500 7V18Q22.500 22 19 22" fill="none" stroke="#000080" stroke-width="1.500"/></svg>
<i class="vsep" style="left:868px;top:83px;height:26px"></i>
<i class="grip" style="left:873px;top:88px;height:23px"></i>
<svg class="ic" style="left:880px;top:84px" width="24" height="24" viewBox="0 0 24 24"><g class="s" stroke="#800000" fill="none" stroke-linecap="round"><path d="M2.500 2Q7 6 9 9T15 15" stroke-width="2.400"/><path d="M14.500 1.500Q9 7 7 10T3 14" stroke-width="2.200"/></g><path d="M17 2.500H21M17 14.500H21M19.500 3V14" stroke="#000" fill="none" stroke-dasharray="1.500 1"/><path d="M2.500 16V20M16.500 16V20M3 18.500H16" stroke="#000" fill="none" stroke-dasharray="1.500 1"/><text x="21" y="10" font-family="Liberation Sans,sans-serif" font-size="6" font-weight="bold" fill="#900090">x</text><text x="8" y="24.500" font-family="Liberation Sans,sans-serif" font-size="6" font-weight="bold" fill="#900090">x</text></svg>
<i class="grip" style="left:3px;top:124.5px;height:23px"></i>
<svg class="ic" style="left:10.5px;top:120.5px" width="24" height="24" viewBox="0 0 24 24"><rect x="2" y="10" width="13.500" height="12" fill="#008080" stroke="#000" stroke-width="1.300"/><circle class="s" cx="15.500" cy="9.500" r="7" fill="none" stroke="#000" stroke-width="1.200"/></svg>
<i class="dd" style="left:41.5px;top:132.5px"></i>
<svg class="ic" style="left:55px;top:120.5px" width="24" height="24" viewBox="0 0 24 24"><g class="s"><path d="M12 6V17Q12 20 17 20T22 17V6Z" fill="#fff" stroke="#808080"/><path d="M18 8V20Q22 19.500 22 17V6Z" fill="#B0B0A8"/><ellipse cx="17" cy="5.500" rx="5" ry="3.300" fill="#fff" stroke="#D02020" stroke-width="1.300"/><path d="M1 16V22Q1 24 6.500 24T12 22V16Z" fill="#fff" stroke="#808080"/><path d="M8 17V24Q12 23.500 12 22V16Z" fill="#B0B0A8"/><ellipse cx="6.500" cy="15" rx="5" ry="3" fill="#E8F8E8" stroke="#208020" stroke-width="1.300"/><path d="M4 11Q3 6 8 5.500" fill="none" stroke="#0020C0" stroke-width="1.500"/><path d="M7 2.500L11 5.500L7 8.500Z" fill="#0020C0"/></g></svg>
<i class="dd" style="left:86.5px;top:132.5px"></i>
<svg class="ic" style="left:100.5px;top:120.5px" width="24" height="24" viewBox="0 0 24 24"><g class="s"><path d="M1 8Q5 5 10.500 7V20Q5 18 1 20Z" fill="#fff" stroke="#000" stroke-width="1.300"/><path d="M23.500 8Q19 5 13.500 7V20Q19 18 23.500 20Z" fill="#fff" stroke="#000" stroke-width="1.300"/><path d="M4 9V18M7 8.500V18M17 8.500V18M20 9V18" stroke="#C0C0C0"/></g><path d="M12 7V20" stroke="#D02020" stroke-width="2" stroke-dasharray="1.500 1"/></svg>
<i class="vsep" style="left:131px;top:119.5px;height:26px"></i>
<svg class="ic" style="left:140px;top:120.5px" width="24" height="24" viewBox="0 0 24 24"><g class="s" fill="none" stroke="#000" stroke-width="1.300"><path d="M1 8L7 1.500H23.500V17L17.500 23.500H1ZM1 8H17.500V23.500M17.500 8L23.500 1.500"/><path d="M1 23.500L7 17H23.500M7 17V1.500" stroke-width=".8"/></g><path class="s" d="M4 9.500L8.500 4.500H17.500L13 9.500Z" fill="url(#hr)" stroke="#D02020" stroke-width=".7"/><path d="M4 9.500H13V21H4Z" fill="url(#hr)" stroke="#D02020" stroke-width=".7"/><path class="s" d="M13 9.500L17.500 4.500V16L13 21Z" fill="#E03030"/><path d="M19 6V17M20.500 5V15" stroke="#E03030" stroke-width="1"/></svg>
<svg class="ic" style="left:172px;top:120.5px" width="24" height="24" viewBox="0 0 24 24"><path d="M2 3.500H10M14 3.500H22" stroke="#E02020" stroke-width="1.500"/><path d="M1 3.500L5 0.500V6.500ZM23 3.500L19 0.500V6.500Z" fill="#E02020"/><path d="M12 0V7" stroke="#E02020" stroke-dasharray="2 1" stroke-width="1.300"/><g class="s"><path d="M1.500 12L5 8.500H23V18L19.500 21.500Z" fill="#fff" stroke="#606060"/><path d="M19.500 12L23 8.500V18L19.500 21.500Z" fill="#B0B0A8" stroke="#404040"/><rect x="1.500" y="12" width="18" height="9.500" fill="#fff" stroke="#000" stroke-width="1.200"/><path d="M11 21V12L14 8.500V17" fill="none" stroke="#D02020" stroke-dasharray="1.500 1"/></g></svg>
<svg class="ic" style="left:203.5px;top:120.5px" width="24" height="24" viewBox="0 0 24 24"><rect x="2.700" y="3.700" width="18.600" height="17.600" fill="#fff" stroke="#000" stroke-width="1.500"/><g class="s" fill="none" stroke="#D02020" stroke-width="1.400"><circle cx="12" cy="12.500" r="5"/><path d="M7.500 12.500H12V16.500"/></g></svg>
<svg class="ic" style="left:235.5px;top:120.5px" width="24" height="24" viewBox="0 0 24 24"><g class="s"><path d="M1 12L4 9H23L20 12H14V19L11 22H6V14H1Z" fill="#fff" stroke="#108020" stroke-width="1.400"/><path d="M1 12H20M6 14H14" stroke="#108020" fill="none"/><path d="M7 5L10 3H14V13L11 18H7Z" fill="url(#hr)" stroke="#D02020" stroke-width=".8"/><path d="M11 6L14 3V13L11 18Z" fill="#E03030"/></g></svg>
<svg class="ic" style="left:268.5px;top:120.5px" width="24" height="24" viewBox="0 0 24 24"><g class="s"><path d="M1.500 5Q12 7 20 3L22 16Q14 15 7 22Q6 12 1.500 5Z" fill="#fff" stroke="#000" stroke-width="1.400"/><circle cx="11" cy="9" r="2.300" fill="none" stroke="#D02020" stroke-width="1.200"/><circle cx="17" cy="13.500" r="2.100" fill="none" stroke="#D02020" stroke-width="1.200"/></g></svg>
<svg class="ic" style="left:300px;top:120.5px" width="24" height="24" viewBox="0 0 24 24"><path d="M2 5L4.500 2.500H22.500V19.500L19.500 22" fill="#fff" stroke="#808080" stroke-width=".9"/><path d="M19.500 5L22.500 2.500V19.500L19.500 22Z" fill="#C0C0B8" stroke="#606060" stroke-width=".6" stroke-dasharray="1 1"/><rect x="1.700" y="5.200" width="17.600" height="16.600" fill="#fff" stroke="#000" stroke-width="1.500"/><rect x="5.500" y="8.500" width="7" height="8" fill="#fff" stroke="#D02020" stroke-width="1.200"/><path d="M8.500 9V13.500H12" stroke="#D02020" fill="none"/><rect x="6" y="13" width="3" height="3" fill="#E8A0A0"/></svg>
<svg class="ic" style="left:331px;top:120.5px" width="24" height="24" viewBox="0 0 24 24"><g class="s"><path d="M1 7L11 1.500L23.500 7L12 12.500Z" fill="url(#hr)" stroke="#000" stroke-width=".9"/><path d="M1 7L12 12.500V24L1 18Z" fill="#F0A040" stroke="#000" stroke-width=".9"/><path d="M1 7L12 12.500V15L1 9.500Z" fill="#D83020"/><path d="M1 14L12 19.500V24L1 18Z" fill="#F8E8C0"/><path d="M12 12.500L23.500 7V18L12 24Z" fill="#fff" stroke="#000" stroke-width=".9"/><path d="M13 9L17 7.500L21 5" stroke="#600000" fill="none"/></g></svg>
<svg class="ic" style="left:364px;top:120.5px" width="24" height="24" viewBox="0 0 24 24"><rect x="0.700" y="9.700" width="21.600" height="13.100" fill="#fff" stroke="#000" stroke-width="1.500"/><g class="s"><circle cx="5" cy="14" r="1.800" fill="none" stroke="#D02020" stroke-width="1.100"/><circle cx="17" cy="18" r="3.300" fill="none" stroke="#D02020" stroke-width="1.200"/><path d="M7 20L22 1.500" stroke="#000" stroke-width="3.600"/><path d="M7.500 19.500L14.500 11L13 9.500L21.500 2" stroke="#F8F020" stroke-width="1.800" fill="none"/></g></svg>
<svg class="ic" style="left:396px;top:120.5px" width="24" height="24" viewBox="0 0 24 24"><path class="s" d="M1.500 4Q12 5 21 3Q22 10 23.500 15Q15 16 7 22Q6 12 1.500 4Z" fill="url(#hr)" stroke="#D02020" stroke-width="1.400"/></svg>
<svg class="ic" style="left:428px;top:120.5px" width="24" height="24" viewBox="0 0 24 24"><rect x="5.500" y="10.500" width="17.500" height="11.500" fill="#fff" stroke="#000" stroke-width="1.400"/><circle class="s" cx="14" cy="16" r="3.200" fill="none" stroke="#D02020" stroke-width="1.200"/><g class="s" stroke="#800000" fill="none" stroke-linecap="round"><path d="M2 3Q7 7 13 13" stroke-width="2.200"/><path d="M13 2Q8 7 3 12" stroke-width="2"/></g></svg>
<svg class="ic" style="left:459.5px;top:120.5px" width="24" height="24" viewBox="0 0 24 24"><path class="s" d="M1.500 3L6 4L12 2.500L17 4L22 2.500V22L17 23L12 21.500L6 23L1.500 22Z" fill="#fff" stroke="#D02020" stroke-width="1.300"/><path d="M4 6V20M19.500 6V20" stroke="#909090" stroke-dasharray="1 2"/><g fill="url(#hm)"><rect x="6" y="7" width="5" height="5" rx=".8"/><rect x="12" y="5" width="5" height="6" rx=".8"/><rect x="6" y="13" width="5" height="6" rx=".8"/><rect x="12" y="12" width="5" height="6" rx=".8"/></g></svg>
<svg class="ic" style="left:491.5px;top:120.5px" width="24" height="24" viewBox="0 0 24 24"><g class="s"><path d="M2 9L10 4.500L22 8L14 13Z" fill="#fff" stroke="#707070" stroke-width=".9"/><path d="M2 9L14 13V21L2 16Z" fill="#F8F890" stroke="#606020" stroke-width=".9"/><path d="M14 13L22 8V16L14 21Z" fill="url(#hy)" stroke="#404010" stroke-width=".9"/><path d="M3 12L19 4" stroke="#D02020" stroke-width="1.200"/></g></svg>
<i class="vsep" style="left:524px;top:119.5px;height:26px"></i>
<svg class="ic" style="left:532px;top:120.5px" width="24" height="24" viewBox="0 0 24 24"><text x="0" y="9.500" font-family="Liberation Mono,monospace" font-size="11.500" font-weight="bold" fill="#000" textLength="23" lengthAdjust="spacingAndGlyphs">MPV</text><path class="s" d="M7 17L11 21.500L20 11" fill="none" stroke="#000080" stroke-width="1.800"/></svg>
<svg class="ic" style="left:564px;top:120.5px" width="24" height="24" viewBox="0 0 24 24"><g class="s"><path d="M4 14L10 10L23.500 15.500V19L17 23L4 18Z" fill="#F8F890" stroke="#808040" stroke-width=".9"/><path d="M4 14L17 19.500V23M17 19.500L23.500 15.500" stroke="#808040" fill="none" stroke-width=".8"/><path d="M5 12Q8 6 12 6L16 8L18 12L22 14L17 18L5 13Z" fill="url(#hb)" stroke="#1030D0" stroke-width=".9"/><path d="M6 6L2.500 2.500" stroke="#D02020" stroke-width="1.400"/><path d="M0.500 0.500L5.500 1.500L1.500 5.500Z" fill="#D02020"/></g></svg>
<i class="grip" style="left:600px;top:124.5px;height:23px"></i>
<i class="vsep" style="left:607px;top:119.5px;height:26px"></i>
<svg class="ic" style="left:615px;top:120.5px" width="24" height="24" viewBox="0 0 24 24"><g class="s"><path d="M1.500 4Q12 2 23 6L19 16Q12 16 6 21Q5 10 1.500 4Z" fill="#fff" stroke="#000" stroke-width="1"/><path d="M1.500 4Q5 10 6 21" fill="none" stroke="#000080" stroke-width="1.600"/><path d="M8 3.500Q11 10 11.500 18M14 3.500Q16 9 16 16.500M19.500 4.500Q20.500 9 19 16" fill="none" stroke="#000080" stroke-width="1.100"/></g></svg>
<svg class="ic" style="left:647px;top:120.5px" width="24" height="24" viewBox="0 0 24 24"><g class="s" fill="none" stroke="#000" stroke-width="1.100"><path d="M1.500 12Q5 4 15 1.500L23.500 12Q14 13 10 23Z" fill="#fff"/><path d="M4.500 15.500Q8 7 18 5M7 19.500Q11 10 21 8.500M5 6.500L13.500 17M10 3.500L18 13.500"/></g></svg>
<svg class="ic" style="left:680px;top:120.5px" width="24" height="24" viewBox="0 0 24 24"><g class="s" fill="none"><path d="M3 12Q9 6 18 3L23 12Q14 14 9 22Z" fill="#fff" stroke="#404040" stroke-width=".9"/><path d="M5 15Q11 9 20 6.500M7 18.500Q13 12 22 10M9 7.500L13 17M14 5L18 13.500" stroke="#404040" stroke-width=".8"/><path d="M2 12Q6 16 9 23M17 2Q22 6 23 12" stroke="#000080" stroke-width="2"/><path d="M5 6L10 3M16 21L21 17" stroke="#900090" stroke-width="1.300"/><path d="M11.500 2L8 2.500L9.500 5.500ZM22.500 15.500L19 16L21 19Z" fill="#900090" stroke="#900090"/></g></svg>
<svg class="ic" style="left:711px;top:120.5px" width="24" height="24" viewBox="0 0 24 24"><g class="s"><path d="M1.500 13L14 5L22.500 3.500V12L12 22Q8 17 1.500 13Z" fill="#fff" stroke="#000080" stroke-width="1.400"/><path d="M14 5Q18 8 22.500 3.500M22.500 12Q17 14 12 22" fill="none" stroke="#000080" stroke-width="1.400"/><path d="M6 10.500Q10 14 10 19M9 8.500Q13 12 13 17M12 6.500Q16 10 16 15M17 6Q19 9 19 12" fill="none" stroke="#D02020" stroke-width="1.100"/><path d="M1.500 13Q7 12 12 22" fill="none" stroke="#000080" stroke-width="1.400"/></g></svg>
<svg class="ic" style="left:743px;top:120.5px" width="24" height="24" viewBox="0 0 24 24"><g class="s"><path d="M1 13L11 3Q18 7 24 10L14 22Q8 18 1 13Z" fill="#fff" stroke="#707070" stroke-width="1"/><path d="M7 10Q10 6 15 8T18 13Q15 18 11 15Q10 12 7 10Z" fill="#F4F4F0" stroke="#000080" stroke-width="1.400"/></g></svg>
<i class="vsep" style="left:775px;top:119.5px;height:26px"></i>
<svg class="ic" style="left:783px;top:120.5px" width="24" height="24" viewBox="0 0 24 24"><g class="s"><path d="M1 8L15 3L20 12L7 19Z" fill="#fff" stroke="#707070" stroke-width="1"/><path d="M8 5.500L12 16" stroke="#C0C0C0"/><path d="M5 17Q5 14 9 14T13 17T8 20T5 17M9 14L7 20M13 17Q19 16 22 9" fill="none" stroke="#000080" stroke-width="1.300"/></g></svg>
<svg class="ic" style="left:815px;top:120.5px" width="24" height="24" viewBox="0 0 24 24"><g class="s"><path d="M2 5L8 2.500V14L2 16Z" fill="#C8C8D8" stroke="#000080" stroke-width="1.400"/><path d="M13 13H18Q21 12 22.500 8V21Q21 24 18 24H13Z" fill="#fff" stroke="#900090" stroke-width="1.400"/><path d="M4 17L9 20.500" stroke="#000080" stroke-width="1.300" stroke-dasharray="2 1"/><path d="M11.500 22L7.500 21.500L9.500 18.500Z" fill="#000080"/></g></svg>
<i class="vsep" style="left:847px;top:119.5px;height:26px"></i>
<svg class="ic" style="left:855px;top:120.5px" width="24" height="24" viewBox="0 0 24 24"><g class="s"><path d="M2 15L12 3Q15 1 17 4Q18 9 23 11L18 17H2Z" fill="#fff" stroke="#000" stroke-width="1.300"/><path d="M7 18Q10 23 13 23T19 18Z" fill="#D0D0C8" stroke="#808080" stroke-width=".9"/><path d="M8 20H16" stroke="#808080" stroke-dasharray="1 1"/></g><path d="M1 17.500H22" stroke="#D02020" stroke-width="1.500"/></svg>
<i class="grip" style="left:891px;top:124.5px;height:23px"></i>
<svg class="ic" style="left:897.5px;top:120.5px" width="24" height="24" viewBox="0 0 24 24"><g class="s"><path d="M1.500 8Q7 7 10 4Q14 3 19 1.500Q19 8 23 17Q17 18 14 21Q10 22 6 24.500Q6 16 1.500 8Z" fill="#fff" stroke="#D02020" stroke-width="1.400"/><path d="M4 9.500Q8 17 8 22M18 4Q19 11 21 16" fill="none" stroke="#C08080" stroke-dasharray="1 1.500"/><g fill="none" stroke="#000" stroke-width="1"><rect x="8" y="8" width="4.500" height="5" rx="1.300" transform="rotate(-15 12 13)"/><rect x="13" y="8" width="4.500" height="5" rx="1.300" transform="rotate(-15 12 13)"/><rect x="8" y="13.500" width="4.500" height="5" rx="1.300" transform="rotate(-15 12 13)"/><rect x="13" y="13.500" width="4.500" height="5" rx="1.300" transform="rotate(-15 12 13)"/></g></g></svg>
<i class="vsep" style="left:930px;top:119.5px;height:26px"></i>
<div class="abs" style="left:0;top:257px;width:32px;height:1px;background:#fff;"></div>
<div class="abs" style="left:5px;top:261px;width:24px;height:2px;background-image:repeating-linear-gradient(to right,#B8B4A2 0,#B8B4A2 2px,transparent 2px,transparent 4px);"></div>
<svg class="ic" style="left:3px;top:268.5px" width="24" height="24" viewBox="0 0 24 24"><g class="s" stroke="#000080" stroke-width="1.200" fill="none"><path d="M0.500 15L7 4L13 2L19 4.500L24 14L12 21.500Z" fill="#F4F4F0"/><path d="M7 4L12.500 7L19 4.500M12.500 7V21" /><path d="M6 13L7 4.500M12.500 15.500L6 13M12.500 15.500L19 12.500V5" stroke="#A0A0A0" stroke-width=".8"/><path d="M6.500 5V12.500L12.500 15V7L18.500 5V12L12.500 15" fill="#fff" stroke="#B0B0B0" stroke-width=".7"/><path d="M7 4L12.500 7L19 4.500M12.500 7V21.500"/></g></svg>
<svg class="ic" style="left:3px;top:300px" width="24" height="24" viewBox="0 0 24 24"><g class="s" stroke="#000080" stroke-width="1.200" fill="none"><path d="M12 0.500L22.500 6L23.500 16L12 23.500L0.500 16L1.500 6Z" fill="#F6F6F2"/><path d="M1.500 6L12 11L22.500 6M12 11V23.500"/><path d="M12 1V11M1 16L12 13L23 16" stroke="#9090C0" stroke-width=".7" stroke-dasharray="1 1.500"/></g></svg>
<svg class="ic" style="left:3px;top:330.5px" width="24" height="24" viewBox="0 0 24 24"><g class="s"><path d="M2.500 8L8 2.500H15Q22 4 23 10V16L18 21.500H2.500Z" fill="#F8F8A0" stroke="#808080" stroke-width=".9"/><path d="M18 11L23 7V16L18 21.500Z" fill="#909038"/><path d="M2.500 8H11Q17 9 18 14V21.500H2.500Z" fill="#F8F890" stroke="#808080" stroke-width=".9"/><path d="M3 10H17M3 12H17.500M3 14H17.500M3 16H17.500M3 18H17.500M3 20H17.500M5 8V21M7 8V21M9 8V21M11 8V21M13 9V21M15 10V21" stroke="#E0E060" stroke-width=".6"/><path d="M11 8Q11 3 16 2.500Q22 4 23 10Q23 12 18 14Q17 9 11 8Z" fill="#fff" stroke="#900050" stroke-width="1.300"/></g></svg>
<svg class="ic" style="left:3px;top:362.5px" width="24" height="24" viewBox="0 0 24 24"><g class="s"><path d="M3 6L7 2.500H14V9L21.500 9V19L18 22.500" fill="#fff" stroke="#707070" stroke-width="1"/><path d="M18 12.500L21.500 9V19L18 22.500Z" fill="#808080"/><path d="M10.500 6L14 2.500V9H10.500Z" fill="#909090"/></g><path d="M3 6H10.500V12.500H18V22.500H3Z" fill="#fff" stroke="#000" stroke-width="1.200" stroke-dasharray="1.300 1"/><path d="M5.500 8H8.500V15H15.500V20H5.500Z" fill="#fff" stroke="#800000" stroke-width="1.600"/><path d="M7 9V17.500H15" stroke="#800000" fill="none" stroke-width="1.500"/></svg>
<svg class="ic" style="left:3px;top:393px" width="24" height="24" viewBox="0 0 24 24"><g class="s"><path d="M1.500 7Q6 4 11 6.500V20Q6 18 1.500 20.500Z" fill="#fff" stroke="#000" stroke-width="1.300"/><path d="M23.500 7Q19 4 14 6.500V20Q19 18 23.500 20.500Z" fill="#fff" stroke="#000" stroke-width="1.300"/><path d="M20 6V19M21.500 6.500V19.500" stroke="#606060"/><path d="M3.500 7V19" stroke="#C0C0C0"/></g><path d="M12.500 6V20.500" stroke="#D02020" stroke-width="2.200" stroke-dasharray="1.500 1"/></svg>
<svg class="ic" style="left:3px;top:423.5px" width="24" height="24" viewBox="0 0 24 24"><g class="s"><ellipse cx="14.500" cy="10" rx="9" ry="8.500" fill="none" stroke="#C02020" stroke-width="1.200" stroke-dasharray="1.200 1.200" transform="rotate(-30 14.500 10)"/><path d="M1.500 10L6 6Q14 4 17 9Q19 12 17 15L12 21.500H1.500Z" fill="#fff" stroke="#000" stroke-width="1"/><path d="M11 10Q16 11 12 21.500L17 15Q19 12 17 9Q14 4 6 6Z" fill="#E8E8E0" stroke="#000" stroke-width=".8"/><path d="M1.500 10H11Q14 12 12.500 21.500H1.500Z" fill="#fff" stroke="#000" stroke-width="1.300"/><path d="M13 11L17 8M13.500 14L18 11M13.500 17L17.500 13.500" stroke="#808080" stroke-width=".7"/></g></svg>
<svg class="ic" style="left:3px;top:455.5px" width="24" height="24" viewBox="0 0 24 24"><g class="s"><path d="M1.500 4V20Q1.500 22.500 6 22.500T10.500 20V4Z" fill="#fff" stroke="#000" stroke-width="1.100"/><path d="M7 6V22.500Q10.500 22 10.500 20V4Z" fill="#C8C8C0"/><path d="M3.500 6V21" stroke="#D0D0D0"/><ellipse cx="6" cy="4" rx="4.500" ry="2.700" fill="#fff" stroke="#000" stroke-width="1.100"/><path d="M17.500 15V21Q17.500 22.500 20.500 22.500T23.500 21V15Z" fill="#fff" stroke="#000" stroke-width="1"/><path d="M21 16V22.500Q23.500 22 23.500 21V15Z" fill="#C8C8C0"/><ellipse cx="20.500" cy="15" rx="3" ry="1.800" fill="#fff" stroke="#000"/><path d="M12 8L15 11" stroke="#900090" stroke-width="1.400"/><path d="M17 13.500L12.500 12.500L16 9Z" fill="#900090"/></g></svg>
<svg class="ic" style="left:3px;top:486px" width="24" height="24" viewBox="0 0 24 24"><g class="s"><path d="M11.500 8.500L15 5H23.500V15L20 18.500H11.500Z" fill="none" stroke="#808080" stroke-dasharray="1 1.200"/><path d="M11.500 8.500H20V18.500M20 8.500L23.500 5" fill="none" stroke="#808080" stroke-dasharray="1 1.200"/><path d="M1.500 8.500L5 5H14.500L11.500 8.500Z" fill="#fff" stroke="#606060" stroke-width=".9"/><rect x="1.500" y="8.500" width="10" height="10" fill="#fff" stroke="#000" stroke-width="1.300"/><path d="M11.500 8.500L14.500 5V15L11.500 18.500Z" fill="#fff" stroke="#C02020" stroke-width="1.200"/></g></svg>
<svg class="ic" style="left:3px;top:516.5px" width="24" height="24" viewBox="0 0 24 24"><g class="s"><path d="M1.500 8.500L5 5H23.500V15L20 18.500" fill="#fff" stroke="#000" stroke-width="1"/><path d="M20 8.500L23.500 5V15L20 18.500Z" fill="#A0A098" stroke="#000" stroke-width=".9"/><rect x="1.500" y="8.500" width="18.500" height="10" fill="#fff" stroke="#000" stroke-width="1.300"/><path d="M11 18.500V8.500L14 5V8.500" fill="none" stroke="#C02020" stroke-width="1.100"/><path d="M13.500 8.500V18.500" stroke="#000" stroke-width="1"/></g></svg>
<svg class="ic" style="left:3px;top:548px" width="24" height="24" viewBox="0 0 24 24"><g class="s"><circle cx="16" cy="8.500" r="7" fill="#008080" stroke="#004040" stroke-width="1"/><rect x="3" y="9" width="13" height="12" fill="#008080" stroke="#000" stroke-width="1.200"/><path d="M9 9A7 7 0 0 0 16 15.500" fill="none" stroke="#000" stroke-width="1"/></g></svg>
<svg class="ic" style="left:3px;top:578.5px" width="24" height="24" viewBox="0 0 24 24"><g class="s"><rect x="3" y="9" width="13" height="12" fill="#008080" stroke="#000" stroke-width="1.200"/><circle cx="16" cy="9" r="7" fill="#ECE9D8" stroke="#000" stroke-width="1.200"/><path d="M9 9.500H16V15.500" fill="none" stroke="#000" stroke-width="1"/></g></svg>
<div class="abs" style="left:0;top:608px;width:32px;height:1px;background:#C5C2B2;"></div>
<div class="abs" style="left:32px;top:149px;width:950px;height:537px;background:#FBFAF5;"></div>
<div class="abs" style="left:0;top:149px;width:32px;height:1px;background:#F6F4EA;"></div>
<div class="abs" style="left:33px;top:150px;width:1px;height:534px;background:#A88C98;"></div>
<div class="abs" id="vp" style="left:34px;top:150px;width:946px;height:534px;border-style:solid;border-color:#94485A #6E3058 #6A2C50 #6C2850;border-width:2px 2px 2px 2px;background:linear-gradient(#26234B 0,#232C58 20%,#1F3B6C 40%,#194D7C 60%,#135F8F 82%,#10699A 100%);"></div>
<svg class="abs" style="left:0;top:0" width="1024" height="768" viewBox="0 0 1024 768"><g fill="none" stroke="#22D038" stroke-width="1.3"><path d="M432 313 L425.5 246 Q425 238 432 237 L492 231.5 L546 230.5 Q551.5 230.5 552 237 L558 313"/><path d="M443 422 Q438 440 440 452 Q442 466 446 476 L450 512 Q451 519 456 519 L572 512 Q577.5 510 577 503 L574 470 Q578 450 575 436 L571 422"/><path d="M479 422 L481 440"/></g><text x="482" y="449" font-family="Liberation Sans,sans-serif" font-size="9" fill="#C83240" letter-spacing="1">YC</text><text x="39" y="679.500" font-family="Liberation Sans,sans-serif" font-size="12" font-weight="bold" fill="#A82838" textLength="72" lengthAdjust="spacingAndGlyphs">TOP WORK</text></svg>
<div class="abs" style="left:390px;top:313px;width:236px;height:110px;border-radius:7px 7px 0 0;background:#0A50DC;"></div>
<div class="abs" style="left:390px;top:313px;width:236px;height:29px;border-radius:7px 7px 0 0;background:linear-gradient(#0C5BE8 0,#2A7BF5 8%,#0A56E0 25%,#0552DC 60%,#0A5DEB 90%,#0449C8 100%);"></div>
<div class="abs" style="left:394px;top:342px;width:228px;height:77px;background:#ECE9D8;"></div>
<div class="t" style="left:398px;top:318px;font:bold 13px 'Liberation Sans','Noto Sans CJK SC',sans-serif;color:#fff;letter-spacing:.5px;text-shadow:1px 1px 0 #0A2A7A;">信息</div>
<svg class="ic" style="left:400px;top:348px" width="34" height="34" viewBox="0 0 34 34"><defs><radialGradient id="rg" cx=".35" cy=".3" r=".8"><stop offset="0" stop-color="#F88070"/><stop offset=".35" stop-color="#E83020"/><stop offset="1" stop-color="#981008"/></radialGradient></defs><g class="s"><circle cx="18.500" cy="19.500" r="15" fill="#000" fill-opacity=".22"/><circle cx="17.300" cy="17.800" r="15" fill="url(#rg)" stroke="#801008" stroke-width="1"/><path d="M10.300 11.300L24.300 24.300M24.300 11.300L10.300 24.300" stroke="#fff" stroke-width="4.300" stroke-linecap="butt"/></g></svg>
<div class="t" style="left:446px;top:350px;font-size:12px;">体不适用于扫掠.</div>
<div class="abs" style="left:471px;top:392px;width:75px;height:20px;border:1px solid #003C74;border-radius:3px;background:linear-gradient(#fff,#F0EFE8 85%,#D6D0C5);box-shadow:inset 0 0 0 2px #A8C0EE;"></div>
<div class="abs" style="left:474px;top:395px;width:69px;height:14px;border:1px dotted #000;"></div>
<div class="t" style="left:481px;top:398px;font-size:12px;font-family:'Liberation Mono','Noto Sans CJK SC',monospace;">确定<span style="letter-spacing:2.500px;font-size:11px">(<u>O</u>)</span></div>
<div class="abs" style="left:982px;top:151px;width:8px;height:533px;background:#ECE9D8;"></div>
<div class="abs" style="left:990px;top:151px;width:34px;height:533px;background:#ACA899;border-left:1px solid #6A6A5C;"></div>
<div class="abs" style="left:982px;top:684px;width:42px;height:2px;background:linear-gradient(#8A8878 0,#8A8878 1px,#fff 1px);"></div>
<div class="rtab" style="top:165px;height:42px;"></div>
<div class="rtab" style="top:207px;height:41px;"></div>
<div class="rtab" style="top:304px;height:40px;"></div>
<div class="rtab" style="top:345px;height:42px;"></div>
<div class="rtab" style="top:399px;height:41px;"></div>
<div class="rtab" style="top:440px;height:42px;"></div>
<div class="rtab" style="top:482px;height:42px;"></div>
<div class="abs" style="left:990px;top:259px;width:30px;height:45px;background:#ECE9D8;border-bottom:1px solid #D8D4C4;border-right:1px solid #F8F8F4;"></div>
<svg class="ic" style="left:992px;top:173.5px" width="24" height="24" viewBox="0 0 24 24"><path d="M5.500 7V21M5.500 18.500H9" stroke="#000080" stroke-width="1.300" fill="none"/><path d="M11 8.500H22M17 18.500H22" stroke="#000" stroke-width="1.300"/><g fill="#F8F070" stroke="#606000" stroke-width="1"><rect x="1.500" y="1.500" width="4" height="4"/><rect x="5.500" y="5.500" width="4" height="4"/><rect x="1.500" y="5.500" width="4" height="4"/><rect x="9.500" y="15.500" width="6" height="6"/></g></svg>
<svg class="ic" style="left:992px;top:215.5px" width="24" height="24" viewBox="0 0 24 24"><path d="M5.500 8V22M5.500 18.500H10" stroke="#000080" stroke-width="1.300" fill="none"/><path d="M11 6.500H22M18 18.500H22" stroke="#000" stroke-width="1.300"/><g class="s" fill="#F4F0E8" stroke="#B02020" stroke-width="1.300"><ellipse cx="5.500" cy="5" rx="4.300" ry="3.800"/><circle cx="13.500" cy="18.500" r="3.300"/></g><path d="M3 5H8" stroke="#B02020" stroke-width="1.300"/><circle class="s" cx="13.500" cy="18.500" r="1.100" fill="#000"/></svg>
<svg class="ic" style="left:992.5px;top:270px" width="24" height="24" viewBox="0 0 24 24"><path d="M3.500 1.500H15L20.500 6.500V22.500H3.500Z" fill="#FFFFD0" stroke="#606060" stroke-width="1"/><path d="M15 1.500V6.500H20.500" fill="#fff" stroke="#606060"/><path d="M20.500 7V22.500H4" stroke="#000" fill="none"/><g class="s"><circle cx="12" cy="14" r="5.500" fill="#1030C0"/><path d="M9 10Q13 9 14 12T12 16T8 16Q7 12 9 10Z" fill="#20A040"/><path d="M14 16Q16 15 16.500 17L14 19Z" fill="#20A040"/><circle cx="10" cy="11.500" r="1.300" fill="#80C0FF" fill-opacity=".7"/></g></svg>
<svg class="ic" style="left:992px;top:311.5px" width="24" height="24" viewBox="0 0 24 24"><g class="s"><path d="M5 11V17Q5 20 12 20T19 17V11Z" fill="#101010"/><path d="M0.500 9L12 3.500L24 9L12 14.500Z" fill="#181818" stroke="#000"/><path d="M12 9L21 10.500V19" fill="none" stroke="#A02080" stroke-width="1.300"/><path d="M20 18.500H22.500V22H20Z" fill="#A02080"/><path d="M6 8L12 5.500" stroke="#505050"/></g></svg>
<svg class="ic" style="left:992px;top:354px" width="24" height="24" viewBox="0 0 24 24"><path class="s" d="M3 2.500H20.500V16.500H19.500L20.500 22L14 16.500H3Z" fill="#FFFFD0" stroke="#000" stroke-width="1.300"/><path d="M3 2.500H20.500" stroke="#606060"/><text x="7" y="15" font-family="Liberation Sans,sans-serif" font-size="15" font-weight="bold" fill="#000080">?</text></svg>
<svg class="ic" style="left:991.5px;top:407.5px" width="24" height="24" viewBox="0 0 24 24"><g class="s"><circle cx="12" cy="12" r="10" fill="#fff" stroke="#303000" stroke-width="1"/><circle cx="12" cy="12" r="8.800" fill="none" stroke="#E8E040" stroke-width="2"/><circle cx="12" cy="12" r="7.300" fill="#fff" stroke="#505050" stroke-width=".6"/><path d="M12 6.500V12H16.500" fill="none" stroke="#000" stroke-width="1.300"/><g fill="#000"><circle cx="12" cy="5.800" r=".7"/><circle cx="18.200" cy="12" r=".7"/><circle cx="12" cy="18.200" r=".7"/><circle cx="5.800" cy="12" r=".7"/><circle cx="15.100" cy="6.600" r=".5"/><circle cx="17.400" cy="8.900" r=".5"/><circle cx="17.400" cy="15.100" r=".5"/><circle cx="15.100" cy="17.400" r=".5"/><circle cx="8.900" cy="17.400" r=".5"/><circle cx="6.600" cy="15.100" r=".5"/><circle cx="6.600" cy="8.900" r=".5"/><circle cx="8.900" cy="6.600" r=".5"/></g></g></svg>
<svg class="ic" style="left:992px;top:449.5px" width="24" height="24" viewBox="0 0 24 24"><rect x="7.500" y="2.500" width="16" height="18" fill="#fff" stroke="#000" stroke-width="1.300"/><path class="s" d="M0.500 1L7.500 3V21L3.500 23.500L0.500 21Z" fill="#fff" stroke="#808080" stroke-width="1"/><path class="s" d="M3.500 2V23" stroke="#C0C0C0"/><g class="s"><circle cx="12.500" cy="6.500" r="2" fill="#1030D0"/><circle cx="12.500" cy="11.500" r="2" fill="#20B030"/><circle cx="12.500" cy="16.500" r="2" fill="#B020B0"/></g><path d="M16 7.500H21M16 12.500H21M16 17.500H21" stroke="#606060"/></svg>
<svg class="ic" style="left:992px;top:491px" width="24" height="24" viewBox="0 0 24 24"><rect x="0.700" y="1.700" width="22.600" height="19.600" fill="#fff" stroke="#000" stroke-width="1.500"/><rect x="6" y="4.500" width="11" height="12.500" fill="#fff" stroke="#000" stroke-width="1.300"/><path d="M6 8.500H17M6 12.500H17" stroke="#000" stroke-width="1.300"/><rect x="7" y="13.500" width="9" height="2" fill="#808080"/><rect x="16" y="18" width="7" height="3" fill="#000"/><rect x="17" y="19" width="2" height="1" fill="#fff"/><rect x="20" y="19" width="2" height="1" fill="#fff"/></svg>
<div class="tb" style="left:0px;top:686px;width:270px;height:33px;"></div>
<div class="tb" style="left:270px;top:686px;width:207px;height:33px;"></div>
<div class="tb" style="left:525px;top:686px;width:235px;height:33px;"></div>
<div class="hl" style="top:718px;background:#C5C2B2;"></div><div class="hl" style="top:719px;background:#fff;"></div>
<i class="grip" style="left:3px;top:690px;height:22px"></i>
<div class="abs" style="left:20px;top:689px;width:53px;height:23px;background:#fff;border:1px solid #7F9DB9;"></div>
<div class="t" style="left:23px;top:693px;font-size:14px;font-family:'Liberation Sans',sans-serif;">100</div>
<div class="abs" style="left:56px;top:691px;width:16px;height:19px;border-radius:2px;background:linear-gradient(135deg,#D2DCFA,#B2C6F4);border:1px solid #C6D4F8;"></div>
<svg class="ic" style="left:58px;top:696px" width="12" height="10" viewBox="0 0 12 10"><path class="s" d="M2.500 3L6 6.500L9.500 3" fill="none" stroke="#4D6185" stroke-width="2"/></svg>
<svg class="ic" style="left:78.5px;top:688.5px" width="24" height="24" viewBox="0 0 24 24"><path class="s" d="M1 21.500L6 16.500H20L15 21.500Z" fill="#fff" stroke="#900090" stroke-width="1.100"/><path class="s" d="M1 17L6 12H20L15 17Z" fill="#fff" stroke="#900090" stroke-width="1.100"/><path class="s" d="M1 12.500L6 7.500H20L15 12.500Z" fill="#fff" stroke="#900090" stroke-width="1.100"/><path class="s" d="M1 8L8 1.500H22L15 8Z" fill="#fff" stroke="#900090" stroke-width="1.100"/><rect x="11.500" y="8.500" width="12" height="14" fill="#fff" stroke="#000" stroke-width="1.200"/><g fill="#C8C850" stroke="#606000" stroke-width=".6"><rect x="13.500" y="10.500" width="2" height="2"/><rect x="13.500" y="14.500" width="2" height="2"/><rect x="13.500" y="18.500" width="2" height="2"/></g><path d="M17 11.500H21M17 15.500H20M17 19.500H21.500" stroke="#606060"/></svg>
<svg class="ic" style="left:110px;top:688.5px" width="24" height="24" viewBox="0 0 24 24"><path class="s" d="M1 22L8 14.500H23L16 22Z" fill="#fff" stroke="#900090" stroke-width="1.100"/><path class="s" d="M1 9L8 1.500H23L16 9Z" fill="#fff" stroke="#900090" stroke-width="1.100"/><path d="M12 9V16" stroke="#1030C0" stroke-width="1.500"/><path d="M8.500 14H15.500L12 18.500Z" fill="#1030C0"/></svg>
<svg class="ic" style="left:143px;top:688.5px" width="24" height="24" viewBox="0 0 24 24"><path class="s" d="M1 22L8 14.500H23L16 22Z" fill="#fff" stroke="#900090" stroke-width="1.100"/><path class="s" d="M1 9L8 1.500H23L16 9Z" fill="#fff" stroke="#900090" stroke-width="1.100"/><path d="M9.500 6.500H14.500L16.500 8.500V15.500H9.500Z" fill="#fff" stroke="#000" stroke-width="1.200"/><path d="M11 10.500H15M11 12.500H15" stroke="#000"/><path d="M14.500 10.500H20L23.500 14V21.500H14.500Z" fill="#fff" stroke="#000060" stroke-width="1.300"/><path d="M16.500 15.500H21.500M16.500 18.500H21.500" stroke="#000060"/></svg>
<svg class="ic" style="left:174px;top:688.5px" width="24" height="24" viewBox="0 0 24 24"><g class="s" stroke="#801010" stroke-width="1.100" fill="none"><path d="M3.500 2V16.500M3.500 16.500L17 22.500M3.500 16.500L19 8.500M5 4L17 22M3.500 16.500L14 17"/></g><g fill="#fff" stroke="#000" stroke-width="1.200"><rect x="2" y="0.800" width="3" height="3"/><rect x="2" y="15" width="3" height="3"/><rect x="17.500" y="7" width="3" height="3"/><rect x="15.500" y="21" width="3" height="3"/></g><g class="s" fill="none" stroke="#303030" stroke-width=".9"><circle cx="9" cy="8" r="1.500"/><circle cx="9.500" cy="13.500" r="1.500"/><circle cx="14" cy="17" r="1.500"/></g></svg>
<svg class="ic" style="left:205.5px;top:688.5px" width="24" height="24" viewBox="0 0 24 24"><g class="s" stroke="#B01818" stroke-width="1.300" fill="none"><path d="M6.500 15V3M8 14.500L19 8M8 16L18 21.500"/></g><path class="s" d="M6.500 0.500L4 5H9ZM21.500 6.500L17 6.500L19 10.500ZM21 23L16.500 22.500L18.500 19Z" fill="#B01818"/><circle class="s" cx="6.500" cy="15.500" r="2.300" fill="#fff" stroke="#0020C0" stroke-width="1.500"/></svg>
<svg class="ic" style="left:237.5px;top:688.5px" width="24" height="24" viewBox="0 0 24 24"><g class="s" stroke="#000" stroke-width="1.300" fill="none"><path d="M10 12.500V2.500M10 12.500L22 6M10 12.500L20 18"/></g><path class="s" d="M10 0L8 4.500H12ZM24 5L19.500 5.500L21.500 9ZM22.500 19.500L18 19L20 15.500Z" fill="#000"/><rect x="8.500" y="11" width="3" height="3" fill="#C02020"/><text x="0" y="23.500" font-family="Liberation Sans,sans-serif" font-size="7" font-weight="bold" fill="#000">(000)</text></svg>
<i class="grip" style="left:274px;top:690px;height:22px"></i>
<i class="vsep" style="left:281px;top:688px;height:26px"></i>
<div class="abs" style="left:299px;top:690px;width:109px;height:22px;background:#ECE9D8;border:1px solid #A9BCCF;"></div>
<div class="t" style="left:305px;top:693px;font-size:14px;color:#A5A293;">任何</div>
<div class="abs" style="left:391px;top:692px;width:15px;height:18px;border-radius:2px;background:#EEECDF;border:1px solid #DDDACB;"></div>
<svg class="ic" style="left:392.5px;top:696px" width="12" height="10" viewBox="0 0 12 10"><path class="s" d="M2.500 3L6 6.500L9.500 3" fill="none" stroke="#C9C7BA" stroke-width="2"/></svg>
<svg class="ic" style="left:413px;top:688.5px" width="24" height="24" viewBox="0 0 24 24"><defs><pattern id="hg" width="2" height="2" patternUnits="userSpaceOnUse"><rect width="2" height="2" fill="#ECE9D8"/><rect width="1" height="1" fill="#9C998A"/><rect x="1" y="1" width="1" height="1" fill="#9C998A"/></pattern></defs><path class="s" d="M10 0.500Q20 0.500 22.500 8Q24 15 19 20Q14 24.500 9 23Q5 22 7 18Q9 15 5 14Q0.500 12 1 8Q3 1 10 0.500Z" fill="url(#hg)" stroke="#ACA899" stroke-width=".8"/><g fill="#ECE9D8"><rect x="8" y="3" width="3.500" height="3.500" transform="rotate(20 10 5)"/><rect x="14" y="5" width="3.500" height="3.500" transform="rotate(35 16 7)"/><rect x="17" y="11" width="3.500" height="3.500" transform="rotate(50 19 13)"/><rect x="13" y="17" width="3.500" height="3.500" transform="rotate(30 15 19)"/><rect x="4" y="7" width="3" height="3"/></g></svg>
<svg class="ic" style="left:444.5px;top:688.5px" width="24" height="24" viewBox="0 0 24 24"><g class="s" fill="none" stroke="#ACA899" stroke-width="1.300"><circle cx="15.500" cy="13" r="3.500"/><path d="M15.500 4V22M7 13H24"/><path d="M4 4Q8 0 11 2.500T12 8" stroke-width="1.400"/></g><path class="s" d="M0.500 2L6.500 3L2 7.500Z" fill="#ACA899"/></svg>
<i class="grip" style="left:529px;top:690px;height:22px"></i>
<svg class="ic" style="left:535px;top:688.5px" width="24" height="24" viewBox="0 0 24 24"><path class="s" d="M3 21L18 5" stroke="#A29F91" stroke-width="1.200"/><rect x="17" y="3" width="3" height="3" fill="#A29F91"/></svg>
<svg class="ic" style="left:567.5px;top:688.5px" width="24" height="24" viewBox="0 0 24 24"><path class="s" d="M3 21L20.500 3.500" stroke="#A29F91" stroke-width="1.200"/><rect x="10.500" y="10.500" width="3" height="3" fill="#A29F91"/></svg>
<svg class="ic" style="left:601px;top:688.5px" width="24" height="24" viewBox="0 0 24 24"><path class="s" d="M2 4Q8 3 10.500 12T22 22" fill="none" stroke="#A29F91" stroke-width="1.200"/><rect x="9" y="11" width="3" height="3" fill="#A29F91"/></svg>
<svg class="ic" style="left:633px;top:688.5px" width="24" height="24" viewBox="0 0 24 24"><path class="s" d="M12.500 3V22M3 18Q6 10 12.500 10T21 16" fill="none" stroke="#A29F91" stroke-width="1.200"/><rect x="11" y="8.500" width="3" height="3" fill="#A29F91"/></svg>
<svg class="ic" style="left:665px;top:689px" width="24" height="24" viewBox="0 0 24 24"><circle class="s" cx="12" cy="12" r="9.300" fill="none" stroke="#A29F91" stroke-width="1.200"/><rect x="10.500" y="10.500" width="3" height="3" fill="#A29F91"/></svg>
<svg class="ic" style="left:697px;top:688.5px" width="24" height="24" viewBox="0 0 24 24"><circle class="s" cx="12" cy="12" r="9.300" fill="none" stroke="#A29F91" stroke-width="1.200"/><g fill="#A29F91"><rect x="10.500" y="1" width="3" height="3"/><rect x="10.500" y="20" width="3" height="3"/><rect x="1" y="10.500" width="3" height="3"/><rect x="20" y="10.500" width="3" height="3"/></g></svg>
<svg class="ic" style="left:728px;top:688.5px" width="24" height="24" viewBox="0 0 24 24"><path d="M12 5V19M5 12H19" stroke="#A29F91" stroke-width="2.200" fill="none"/></svg>
<div class="t" style="left:2px;top:723px;font-size:12px;font-family:'Liberation Mono','Noto Sans CJK SC',monospace;">选择对象并使用 <span style="font-size:10px">MB3</span>，或者双击某一对象</div>
<div class="t" style="left:553px;top:723px;font-size:12px;">生成拉伸特征</div>
<div class="abs" style="left:547px;top:722px;width:2px;height:14px;border-left:1px solid #C5C2B2;border-right:1px solid #fff;"></div>
<div class="abs" style="left:918px;top:722px;width:2px;height:14px;border-left:1px solid #C5C2B2;border-right:1px solid #fff;"></div>
<div class="abs" style="left:1005px;top:722px;width:2px;height:14px;border-left:1px solid #C5C2B2;border-right:1px solid #fff;"></div>
<div class="abs" style="left:0;top:738px;width:1024px;height:30px;background:linear-gradient(#3168D5 0,#4993E6 2px,#2B71E0 5px,#2663DA 12px,#245DDB 22px,#1F50C0 28px,#1941A5 30px);"></div>
<div class="abs" style="left:0;top:738px;width:97px;height:30px;border-radius:0 13px 13px 0 / 0 15px 15px 0;background:linear-gradient(#3E9B3E 0,#5FBE5F 3px,#3F9E40 8px,#379237 20px,#2D7E2E 30px);box-shadow:2px 0 3px rgba(0,0,60,.45);"></div>
<svg class="ic" style="left:9.5px;top:742px" width="20" height="20" viewBox="0 0 20 20"><g class="s"><path d="M3.500 2.500Q7 0.500 10.500 2.500L9.500 9.500Q6 7.500 2.500 9.500Z" fill="#E8582C"/><path d="M11.500 3Q15 5 18.500 3L17.500 10Q14 12 10.500 10Z" fill="#78C040"/><path d="M2.300 10.500Q6 8.500 9.300 10.500L8.300 17.500Q5 15.500 1.300 17.500Z" fill="#4C8CE8"/><path d="M10.300 11Q14 13 17.300 11L16.300 18Q13 20 9.300 18Z" fill="#F8C820"/></g></svg>
<div class="t" style="left:36px;top:737px;font:italic 300 20px 'Liberation Sans','Noto Sans CJK SC',sans-serif;color:#fff;text-shadow:1px 1px 1px #1A4A1A;">开始</div>
<svg class="ic" style="left:107px;top:743px" width="20" height="20" viewBox="0 0 20 20"><g class="s"><circle cx="10" cy="11" r="6.200" fill="none" stroke="#58B8F8" stroke-width="3"/><path d="M5 11H16" stroke="#58B8F8" stroke-width="2.400"/><path d="M10 11H17V16H13Z" fill="#2866D8"/><path d="M1.500 17Q0 12 8 6Q15 2 18.500 3.500" fill="none" stroke="#8CD0F8" stroke-width="1.400"/></g></svg>
<svg class="ic" style="left:130px;top:742.5px" width="20" height="20" viewBox="0 0 20 20"><g class="s"><path d="M4.500 2H15.500L14 13H6Z" fill="#A8D0F8" stroke="#D8E8F8" stroke-width="1"/><path d="M6 4H14L13 11.500H7Z" fill="#5898E8"/><path d="M7 14H13L15 17.500H5Z" fill="#E8E0F0" stroke="#A898B8" stroke-width=".8"/><path d="M10 14.500L11.500 17H8.500Z" fill="#C04040"/></g></svg>
<svg class="ic" style="left:153px;top:742.5px" width="20" height="20" viewBox="0 0 20 20"><g class="s"><rect x="3" y="3" width="14" height="14" rx="3" fill="#D8E8F8" stroke="#F8FCFF" stroke-width="1"/><rect x="6" y="5" width="8" height="10" fill="#fff" stroke="#4070C0" stroke-width="1"/><path d="M7.500 8H12.500M7.500 10.500H12.500M7.500 13H11" stroke="#4070C0" stroke-width=".9"/><circle cx="15" cy="7" r="2" fill="#3868C8"/><path d="M17 5L19 7" stroke="#D03030" stroke-width="1.500"/></g></svg>
<div class="t" style="left:183px;top:740px;font-size:13px;color:#A9C8F8;font-family:'Liberation Sans',sans-serif;">»</div>
<div class="task" style="left:199px;width:117px;"><span>AutoCAD 2...</span></div>
<svg class="ic" style="left:207px;top:744px" width="18" height="18" viewBox="0 0 18 18"><rect x="1.500" y="1.500" width="15" height="15" fill="#2C66C8" stroke="#E8F0FF" stroke-width="1.300"/><path d="M1.500 5H16.500M5 1.500V16.500" stroke="#E8F0FF" stroke-width="1"/><rect x="2.800" y="2.800" width="2" height="2" fill="none" stroke="#E8F0FF" stroke-width=".8"/><text x="6.500" y="15" font-family="Liberation Sans,sans-serif" font-size="11" fill="#E8F0FF">a</text></svg>
<div class="task" style="left:319px;width:118px;"><span>Unigraphi...</span></div>
<svg class="ic" style="left:327px;top:744px" width="18" height="18" viewBox="0 0 18 18"><path class="s" d="M0.5 2.2L3.5 0.5L6.5 2.2V5.8L3.5 7.5L0.5 5.8Z" fill="#fff" stroke="#1818A8" stroke-width=".9"/><path class="s" d="M3.5 3.9V7.5M0.8 2.4L3.5 3.9L6.2 2.4" stroke="#1818A8" stroke-width=".9" fill="none"/><path class="s" d="M3.5 3.9L6.5 2.2V5.8L3.5 7.5Z" fill="#1818A8" fill-opacity=".75"/><path class="s" d="M0.5 10.7L3.5 9L6.5 10.7V14.3L3.5 16L0.5 14.3Z" fill="#fff" stroke="#1818A8" stroke-width=".9"/><path class="s" d="M3.5 12.4V16M0.8 10.9L3.5 12.4L6.2 10.9" stroke="#1818A8" stroke-width=".9" fill="none"/><path class="s" d="M3.5 12.4L6.5 10.7V14.3L3.5 16Z" fill="#1818A8" fill-opacity=".75"/><path class="s" d="M10 12.2L13 10.5L16 12.2V15.8L13 17.5L10 15.8Z" fill="#fff" stroke="#1818A8" stroke-width=".9"/><path class="s" d="M13 13.9V17.5M10.3 12.4L13 13.9L15.7 12.4" stroke="#1818A8" stroke-width=".9" fill="none"/><path class="s" d="M13 13.9L16 12.2V15.8L13 17.5Z" fill="#1818A8" fill-opacity=".75"/><path class="s" d="M7 5L10.500 3L14.500 5V9.500L10.500 12L7 9.500Z" fill="#F09020"/><path class="s" d="M7 5L10.500 7L14.500 5L10.500 3Z" fill="#F8C060"/><path class="s" d="M4.500 9L8 6.500L10.500 9L9 13L5 14Z" fill="#40B030"/><path class="s" d="M5 8L7.500 6.500L8.500 10L6 12Z" fill="#F8F080"/></svg>
<div class="task on" style="left:438px;width:119px;"><span>Unigraphi...</span></div>
<svg class="ic" style="left:446px;top:744px" width="18" height="18" viewBox="0 0 18 18"><path class="s" d="M0.5 2.2L3.5 0.5L6.5 2.2V5.8L3.5 7.5L0.5 5.8Z" fill="#fff" stroke="#1818A8" stroke-width=".9"/><path class="s" d="M3.5 3.9V7.5M0.8 2.4L3.5 3.9L6.2 2.4" stroke="#1818A8" stroke-width=".9" fill="none"/><path class="s" d="M3.5 3.9L6.5 2.2V5.8L3.5 7.5Z" fill="#1818A8" fill-opacity=".75"/><path class="s" d="M0.5 10.7L3.5 9L6.5 10.7V14.3L3.5 16L0.5 14.3Z" fill="#fff" stroke="#1818A8" stroke-width=".9"/><path class="s" d="M3.5 12.4V16M0.8 10.9L3.5 12.4L6.2 10.9" stroke="#1818A8" stroke-width=".9" fill="none"/><path class="s" d="M3.5 12.4L6.5 10.7V14.3L3.5 16Z" fill="#1818A8" fill-opacity=".75"/><path class="s" d="M10 12.2L13 10.5L16 12.2V15.8L13 17.5L10 15.8Z" fill="#fff" stroke="#1818A8" stroke-width=".9"/><path class="s" d="M13 13.9V17.5M10.3 12.4L13 13.9L15.7 12.4" stroke="#1818A8" stroke-width=".9" fill="none"/><path class="s" d="M13 13.9L16 12.2V15.8L13 17.5Z" fill="#1818A8" fill-opacity=".75"/><path class="s" d="M7 5L10.500 3L14.500 5V9.500L10.500 12L7 9.500Z" fill="#F09020"/><path class="s" d="M7 5L10.500 7L14.500 5L10.500 3Z" fill="#F8C060"/><path class="s" d="M4.500 9L8 6.500L10.500 9L9 13L5 14Z" fill="#40B030"/><path class="s" d="M5 8L7.500 6.500L8.500 10L6 12Z" fill="#F8F080"/></svg>
<div class="task" style="left:559px;width:118px;"><span>NX 4 -</span></div>
<svg class="ic" style="left:567px;top:744px" width="18" height="18" viewBox="0 0 18 18"><g class="s"><circle cx="9" cy="10.500" r="5.500" fill="#40A8E8"/><path d="M5 8Q8 6 11 8T13 12" fill="none" stroke="#B8E4F8" stroke-width="1.500"/><path d="M2 1L10 2.500L7 9Z" fill="#D82030"/><path d="M1.500 13Q3 18 10 17Q16 15.500 17 8" fill="none" stroke="#E8B040" stroke-width="2"/></g></svg>
<div class="task" style="left:680px;width:118px;"><span><b>建模</b> - Mi...</span></div>
<svg class="ic" style="left:688px;top:744px" width="18" height="18" viewBox="0 0 18 18"><g class="s"><path d="M5 1.500H13L16.500 5V16.500H5Z" fill="#fff" stroke="#A0A8B8" stroke-width=".9"/><circle cx="7" cy="9" r="4" fill="none" stroke="#2870E0" stroke-width="2.200"/><path d="M3.500 9H11" stroke="#2870E0" stroke-width="1.800"/><path d="M1 13Q0 9 6 5Q10 3 12 4" fill="none" stroke="#58B0F0" stroke-width="1.100"/></g></svg>
<div class="task" style="left:801px;width:119px;"><span>F:\<b>常用软件</b></span></div>
<svg class="ic" style="left:809px;top:744px" width="18" height="18" viewBox="0 0 18 18"><g class="s"><path d="M1.500 4.500Q1.500 3 3 3H7L8.500 4.500H15Q16.500 4.500 16.500 6V14Q16.500 15.500 15 15.500H3Q1.500 15.500 1.500 14Z" fill="#F8D878" stroke="#B88820" stroke-width="1"/><path d="M1.500 14L3.500 7.500Q4 6.500 5 6.500H16.500" fill="none" stroke="#FFF0B0" stroke-width="1.200"/><path d="M3 15L5 8H16.500V14Q16.500 15.500 15 15.500H3Z" fill="#F0C858"/></g></svg>
<div class="abs" style="left:966px;top:738px;width:58px;height:30px;background:linear-gradient(#1A6FD0 0,#1FA0F0 3px,#1390E6 8px,#1188DE 22px,#0D6FC0 30px);border-left:1px solid #0E4FA8;box-shadow:inset 1px 0 0 #35A8F5;"></div>
<svg class="ic" style="left:929.5px;top:746px" width="18" height="14" viewBox="0 0 18 14"><rect x="0.600" y="3.600" width="16.800" height="9.800" rx="1" fill="#fff" stroke="#000" stroke-width="1.200"/><path d="M2.500 6.500H16M2.500 8.500H16M3 10.500H15.500" stroke="#000" stroke-width="1" stroke-dasharray="1 1"/><path class="s" d="M4 3Q6 0 8 2T12 1.500T15 3" fill="none" stroke="#000" stroke-width=".8" stroke-dasharray="1 1"/></svg>
<svg class="ic" style="left:957px;top:744px" width="18" height="18" viewBox="0 0 18 18"><g class="s"><circle cx="9" cy="9" r="8.500" fill="#2A8CF0" stroke="#8CC8FF" stroke-width="1"/><circle cx="9" cy="9" r="7" fill="#1C6CE0"/><path d="M6 4.500Q9 2.500 12 4.500" stroke="#70B8FF" stroke-width="1.500" fill="none"/><path d="M10.500 5.500L7 9L10.500 12.500" fill="none" stroke="#fff" stroke-width="2.200"/></g></svg>
<div class="t" style="left:980px;top:748px;font-size:10.300px;color:#fff;font-family:'Liberation Mono',monospace;">21:16</div>
</div>
</body>
</html>
